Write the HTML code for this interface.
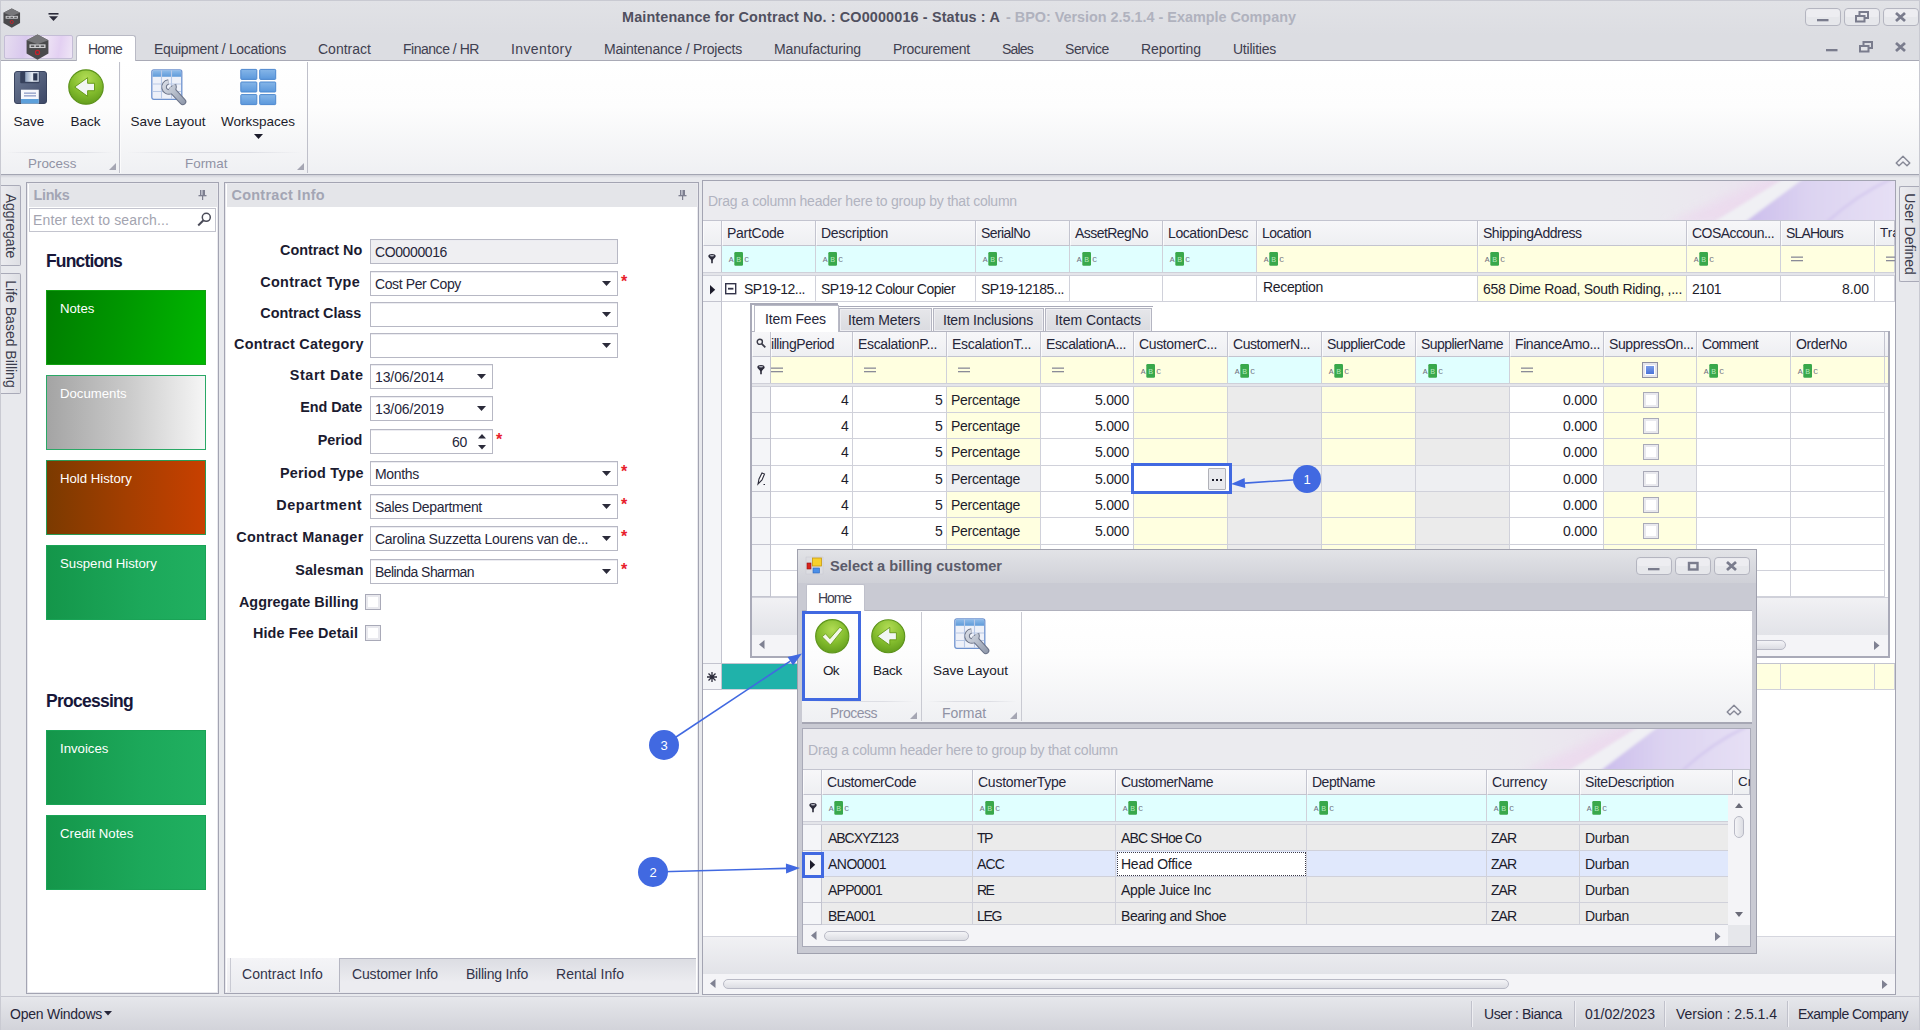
<!DOCTYPE html><html><head><meta charset="utf-8"><title>Maintenance for Contract</title><style>
*{box-sizing:border-box;margin:0;padding:0}
html,body{width:1920px;height:1030px;overflow:hidden;background:#e8e9ed;font-family:"Liberation Sans",sans-serif;font-size:13.4px;color:#1c1c2b}
div{position:absolute}
.t{white-space:nowrap;line-height:16px;height:16px}
.b{font-weight:bold}
.r{text-align:right}
svg{position:absolute;overflow:visible}
</style></head><body>
<div style="left:0px;top:0px;width:1920px;height:35px;background:linear-gradient(#e1e2e6,#dcdde2);border-top:1px solid #c9cad2"></div>
<svg style="left:2.5px;top:8px" width="17.5" height="20.125" viewBox="0 0 20 23"><polygon points="10,0.5 19.5,5.5 19.5,17 10,22.5 0.5,17 0.5,5.5" fill="#4a4a4c"/><polygon points="10,0.5 19.5,5.5 10,9 0.5,5.5" fill="#77777a"/><rect x="3" y="9" width="14" height="3.2" fill="#cfcfd2"/><rect x="4.2" y="10" width="3" height="1.2" fill="#4a4a4c"/><rect x="8.5" y="10" width="3" height="1.2" fill="#4a4a4c"/><rect x="12.8" y="10" width="3" height="1.2" fill="#4a4a4c"/><circle cx="10" cy="16" r="1.8" fill="none" stroke="#c8202a" stroke-width="1"/></svg>
<svg style="left:48px;top:13px" width="11" height="9" viewBox="0 0 11 9"><rect x="0.5" y="0" width="10" height="1.6" fill="#2b2b3a"/><polygon points="1,3.2 10,3.2 5.5,8" fill="#2b2b3a"/></svg>
<div class="t" style="left:622px;top:9px;font-size:14.4px;font-weight:bold;letter-spacing:0.14px;color:#50505f">Maintenance for Contract No. : CO0000016 - Status : A</div>
<div class="t" style="left:1006px;top:9px;font-size:14.4px;font-weight:bold;letter-spacing:-0.01px;color:#b0b2be">- BPO: Version 2.5.1.4 - Example Company</div>
<svg style="left:1805px;top:8px" width="36" height="18"><rect x="0.500" y="0.500" width="35" height="17" rx="3.500" fill="#e6e7eb" stroke="#b4b5c0"/><rect x="1.500" y="1.500" width="33" height="7.5" rx="2" fill="#ededf1"/><rect x="12" y="11" width="11.500" height="2.300" fill="#7a7c8d"/></svg>
<svg style="left:1844px;top:8px" width="36" height="18"><rect x="0.500" y="0.500" width="35" height="17" rx="3.500" fill="#e6e7eb" stroke="#b4b5c0"/><rect x="1.500" y="1.500" width="33" height="7.5" rx="2" fill="#ededf1"/><rect x="15.500" y="4" width="8.500" height="6" fill="none" stroke="#7a7c8d" stroke-width="2"/><rect x="12" y="8" width="8.500" height="5.500" fill="#e3e4e8" stroke="#7a7c8d" stroke-width="2"/></svg>
<svg style="left:1883px;top:8px" width="36" height="18"><rect x="0.500" y="0.500" width="35" height="17" rx="3.500" fill="#e6e7eb" stroke="#b4b5c0"/><rect x="1.500" y="1.500" width="33" height="7.5" rx="2" fill="#ededf1"/><path d="M13,5 L22,13 M22,5 L13,13" stroke="#7a7c8d" stroke-width="2.800" fill="none"/></svg>
<div style="left:0px;top:35px;width:1920px;height:26px;background:#dcdde2;border-bottom:1px solid #a9aab6"></div>
<svg style="left:1814px;top:38px" width="36" height="18"><rect x="12" y="11" width="11.500" height="2.300" fill="#7a7c8d"/></svg>
<svg style="left:1848px;top:38px" width="36" height="18"><rect x="15.500" y="4" width="8.500" height="6" fill="none" stroke="#7a7c8d" stroke-width="2"/><rect x="12" y="8" width="8.500" height="5.500" fill="#e3e4e8" stroke="#7a7c8d" stroke-width="2"/></svg>
<svg style="left:1883px;top:38px" width="36" height="18"><path d="M13,5 L22,13 M22,5 L13,13" stroke="#7a7c8d" stroke-width="2.800" fill="none"/></svg>
<div style="left:4px;top:35px;width:69px;height:24px;border:1px solid #c4bdd6;border-radius:2px;background:linear-gradient(100deg,#e6ddf0 0%,#d9c8ee 30%,#f0e8f6 55%,#e3d0f2 80%,#efe6f6 100%)"></div>
<svg style="left:26px;top:34px" width="23" height="26.45" viewBox="0 0 20 23"><polygon points="10,0.5 19.5,5.5 19.5,17 10,22.5 0.5,17 0.5,5.5" fill="#4a4a4c"/><polygon points="10,0.5 19.5,5.5 10,9 0.5,5.5" fill="#77777a"/><rect x="3" y="9" width="14" height="3.2" fill="#cfcfd2"/><rect x="4.2" y="10" width="3" height="1.2" fill="#4a4a4c"/><rect x="8.5" y="10" width="3" height="1.2" fill="#4a4a4c"/><rect x="12.8" y="10" width="3" height="1.2" fill="#4a4a4c"/><circle cx="10" cy="16" r="1.8" fill="none" stroke="#c8202a" stroke-width="1"/></svg>
<div style="left:76px;top:35px;width:60px;height:27px;background:#fff;border:1px solid #b9bac5;border-bottom:none;border-radius:3px 3px 0 0"></div>
<div class="t" style="left:88px;top:41px;font-size:14px;letter-spacing:-0.84px;color:#3f4050">Home</div>
<div class="t" style="left:154px;top:41px;font-size:14px;letter-spacing:-0.31px;color:#3f4050">Equipment / Locations</div>
<div class="t" style="left:318px;top:41px;font-size:14px;letter-spacing:0.01px;color:#3f4050">Contract</div>
<div class="t" style="left:403px;top:41px;font-size:14px;letter-spacing:-0.48px;color:#3f4050">Finance / HR</div>
<div class="t" style="left:511px;top:41px;font-size:14px;letter-spacing:0.38px;color:#3f4050">Inventory</div>
<div class="t" style="left:604px;top:41px;font-size:14px;letter-spacing:-0.20px;color:#3f4050">Maintenance / Projects</div>
<div class="t" style="left:774px;top:41px;font-size:14px;letter-spacing:-0.13px;color:#3f4050">Manufacturing</div>
<div class="t" style="left:893px;top:41px;font-size:14px;letter-spacing:-0.29px;color:#3f4050">Procurement</div>
<div class="t" style="left:1002px;top:41px;font-size:14px;letter-spacing:-0.81px;color:#3f4050">Sales</div>
<div class="t" style="left:1065px;top:41px;font-size:14px;letter-spacing:-0.38px;color:#3f4050">Service</div>
<div class="t" style="left:1141px;top:41px;font-size:14px;letter-spacing:-0.08px;color:#3f4050">Reporting</div>
<div class="t" style="left:1233px;top:41px;font-size:14px;letter-spacing:-0.24px;color:#3f4050">Utilities</div>
<div style="left:0px;top:61px;width:1920px;height:114px;background:linear-gradient(#ffffff 0%,#fdfdfd 40%,#eff0f3 100%);border-bottom:1px solid #a3a5b2"></div>
<div style="left:0px;top:175px;width:1920px;height:3px;background:linear-gradient(#cfd0d8,#e8e9ed)"></div>
<div style="left:119px;top:62px;width:1px;height:111px;background:#bfc0ca"></div>
<div style="left:120px;top:62px;width:1px;height:111px;background:#fbfbfc"></div>
<div style="left:307px;top:62px;width:1px;height:111px;background:#bfc0ca"></div>
<div style="left:6px;top:152px;width:108px;height:1px;background:linear-gradient(90deg,transparent,#dddee4 30%,#dddee4 70%,transparent)"></div>
<div style="left:126px;top:152px;width:176px;height:1px;background:linear-gradient(90deg,transparent,#dddee4 30%,#dddee4 70%,transparent)"></div>
<div class="t" style="left:28px;top:156px;color:#9092a4">Process</div>
<div class="t" style="left:185px;top:156px;color:#9092a4">Format</div>
<svg style="left:109px;top:163px" width="7" height="7"><polygon points="7,0 7,7 0,7" fill="#a5a6b3"/></svg>
<svg style="left:297px;top:163px" width="7" height="7"><polygon points="7,0 7,7 0,7" fill="#a5a6b3"/></svg>
<svg style="left:1894.5px;top:154.5px" width="16" height="12" viewBox="0 0 16 12"><path d="M8,1.200 L14.800,8 L12,10.800 L8,7 L4,10.800 L1.200,8 Z" fill="#f1f1f5" stroke="#868896" stroke-width="1.400" stroke-linejoin="round"/></svg>
<svg style="left:14px;top:71px" width="33" height="33" viewBox="0 0 33 33">
<defs><linearGradient id="sv14" x1="0" y1="0" x2="1" y2="1"><stop offset="0" stop-color="#6c7994"/><stop offset="1" stop-color="#3d4866"/></linearGradient>
<linearGradient id="sm14" x1="0" y1="0" x2="1" y2="0"><stop offset="0" stop-color="#8fa2bf"/><stop offset="0.5" stop-color="#e6ecf4"/><stop offset="1" stop-color="#c5d0e0"/></linearGradient></defs>
<rect x="0.500" y="0.500" width="32" height="32" rx="2.500" fill="url(#sv14)" stroke="#3a445f"/>
<rect x="6.200" y="1" width="19.400" height="11.300" rx="1" fill="#36415c"/>
<rect x="11.200" y="1" width="13.600" height="9.800" fill="url(#sm14)"/><rect x="19.200" y="2.300" width="4.200" height="7.200" fill="#2c3752"/>
<rect x="7" y="18.700" width="17.800" height="13.800" fill="#f6f8fc"/><rect x="7" y="28" width="17.800" height="4.500" fill="#5da0db"/>
<rect x="10" y="21.500" width="12" height="1.300" fill="#8d9cc6"/><rect x="10" y="24.200" width="12" height="1.300" fill="#8d9cc6"/></svg>
<svg style="left:68.4px;top:69.4px" width="36" height="36" viewBox="0 0 36 36">
<defs><radialGradient id="bk68_4" cx="0.5" cy="0.25" r="0.8"><stop offset="0" stop-color="#b2dc55"/><stop offset="0.55" stop-color="#84bd2e"/><stop offset="1" stop-color="#5f991a"/></radialGradient></defs>
<circle cx="18" cy="18" r="17.200" fill="url(#bk68_4)" stroke="#5d931c" stroke-width="1.200"/>
<path d="M6.700,18 L19.600,8.700 L19.600,14.300 L26.500,14.300 L26.500,21.700 L19.600,21.700 L19.600,27.300 Z" fill="#f1f6f4" stroke="#5f9410" stroke-width="0.900" stroke-linejoin="round"/></svg>
<svg style="left:151px;top:69px" width="37" height="37" viewBox="0 0 37 37">
<defs><linearGradient id="lh151" x1="0" y1="0" x2="0" y2="1"><stop offset="0" stop-color="#8fbcea"/><stop offset="1" stop-color="#5e9ad9"/></linearGradient>
<linearGradient id="lw151" gradientUnits="userSpaceOnUse" x1="12" y1="12" x2="34" y2="34"><stop offset="0" stop-color="#d9dde6"/><stop offset="0.5" stop-color="#b9c0cd"/><stop offset="1" stop-color="#9099ab"/></linearGradient></defs>
<rect x="0.800" y="0.800" width="30" height="29.500" rx="2" fill="#eef1f9" stroke="#6f93cf" stroke-width="1.300"/>
<path d="M1.500,2.800 a1.500,1.500 0 0 1 1.500,-1.500 h25.600 a1.500,1.500 0 0 1 1.500,1.500 v5 h-28.600 z" fill="url(#lh151)"/>
<path d="M1.500,15 H30 M1.500,22.500 H30 M10.500,1.500 V29.500 M20.500,1.500 V29.500" stroke="#b9c9e6" stroke-width="1.100" fill="none"/>
<g fill="none"><path d="M22.600,15.900 A5,5 0 1 1 17.500,13" stroke="#6b7388" stroke-width="5.600"/><path d="M21,21 L31.800,32.600" stroke="#6b7388" stroke-width="7" stroke-linecap="round"/>
<path d="M22.600,15.900 A5,5 0 1 1 17.500,13" stroke="url(#lw151)" stroke-width="3.600"/><path d="M20.500,20.500 L31.800,32.600" stroke="url(#lw151)" stroke-width="5" stroke-linecap="round"/></g></svg>
<svg style="left:240px;top:69px" width="37" height="37" viewBox="0 0 37 37"><defs><linearGradient id="wg240" x1="0" y1="0" x2="0" y2="1"><stop offset="0" stop-color="#86b6e8"/><stop offset="1" stop-color="#5b98dc"/></linearGradient></defs><rect x="0.8" y="0.4" width="16" height="10" rx="0.800" fill="url(#wg240)" stroke="#4d88cf" stroke-width="1"/><rect x="19.7" y="0.4" width="16" height="10" rx="0.800" fill="url(#wg240)" stroke="#4d88cf" stroke-width="1"/><rect x="0.8" y="13.0" width="16" height="10" rx="0.800" fill="url(#wg240)" stroke="#4d88cf" stroke-width="1"/><rect x="19.7" y="13.0" width="16" height="10" rx="0.800" fill="url(#wg240)" stroke="#4d88cf" stroke-width="1"/><rect x="0.8" y="25.6" width="16" height="10" rx="0.800" fill="url(#wg240)" stroke="#4d88cf" stroke-width="1"/><rect x="19.7" y="25.6" width="16" height="10" rx="0.800" fill="url(#wg240)" stroke="#4d88cf" stroke-width="1"/></svg>
<div class="t" style="left:-71px;width:200px;text-align:center;top:114px;font-size:13.5px">Save</div>
<div class="t" style="left:-14.5px;width:200px;text-align:center;top:114px;font-size:13.5px">Back</div>
<div class="t" style="left:68px;width:200px;text-align:center;top:114px;font-size:13.5px">Save Layout</div>
<div class="t" style="left:158px;width:200px;text-align:center;top:114px;font-size:13.5px">Workspaces</div>
<svg style="left:254px;top:134px" width="9" height="5"><polygon points="0,0 9,0 4.5,5" fill="#1c1c2b"/></svg>
<div style="left:0px;top:185px;width:21px;height:81px;border:1px solid #a9aab8;border-left:none;border-radius:0 2px 2px 0;background:linear-gradient(90deg,#ececf0,#dedfe4)"></div><div class="t" style="left:10.5px;top:225.5px;width:0;height:0"><div class="t" style="transform:translate(-50%,-50%) rotate(90deg);color:#3b3c4c;font-size:14px;left:0;top:0">Aggregate</div></div>
<div style="left:0px;top:273px;width:21px;height:121px;border:1px solid #a9aab8;border-left:none;border-radius:0 2px 2px 0;background:linear-gradient(90deg,#ececf0,#dedfe4)"></div><div class="t" style="left:10.5px;top:333.5px;width:0;height:0"><div class="t" style="transform:translate(-50%,-50%) rotate(90deg);color:#3b3c4c;font-size:14px;left:0;top:0">Life Based Billing</div></div>
<div style="left:1899px;top:186px;width:21px;height:96px;border:1px solid #a9aab8;border-right:none;border-radius:2px 0 0 2px;background:linear-gradient(90deg,#ececf0,#dedfe4)"></div><div class="t" style="left:1909.5px;top:234.0px;width:0;height:0"><div class="t" style="transform:translate(-50%,-50%) rotate(90deg);color:#3b3c4c;font-size:14px;left:0;top:0">User Defined</div></div>
<div style="left:26px;top:182px;width:193px;height:812px;border:1px solid #a3a4b2;background:#fff"></div><div style="left:27px;top:183px;width:191px;height:810px;border:1px solid #e9e9ee"></div><div style="left:29px;top:184px;width:188px;height:23px;background:#e4e5e9"></div><div class="t" style="left:33.5px;top:187px;font-size:14.4px;font-weight:bold;letter-spacing:-0.32px;color:#a3a5b4">Links</div><svg style="left:198px;top:190px" width="9" height="10" viewBox="0 0 9 10"><rect x="2" y="0" width="5" height="5.500" fill="#7d7f90"/><rect x="3.2" y="0" width="1.4" height="5" fill="#c9cad4"/><rect x="0.5" y="5" width="8" height="1.3" fill="#7d7f90"/><rect x="4" y="6" width="1.200" height="4" fill="#7d7f90"/></svg>
<div style="left:29px;top:208px;width:187px;height:24px;border:1px solid #c3c4ce;background:#fff"></div>
<div class="t" style="left:33px;top:212px;font-size:14px;letter-spacing:0.13px;color:#a3a4b0">Enter text to search...</div>
<svg style="left:197px;top:212px" width="15" height="15" viewBox="0 0 15 15"><circle cx="9.3" cy="5.300" r="4" fill="none" stroke="#4a4b58" stroke-width="1.5"/><path d="M6.500,8.200 L1.200,13.500" stroke="#4a4b58" stroke-width="2"/></svg>
<div class="t" style="left:46px;top:251px;font-size:17.5px;font-weight:bold;letter-spacing:-0.85px;color:#17173a;line-height:20px;height:20px">Functions</div>
<div class="t" style="left:46px;top:691px;font-size:17.5px;font-weight:bold;letter-spacing:-0.74px;color:#17173a;line-height:20px;height:20px">Processing</div>
<div style="left:46px;top:290px;width:160px;height:75px;background:linear-gradient(100deg,#007d00 0%,#009600 45%,#00b800 100%);border:1px solid #12a012"></div><div class="t" style="left:60px;top:301px;color:#fff;font-size:13.2px">Notes</div>
<div style="left:46px;top:375px;width:160px;height:75px;background:linear-gradient(90deg,#a4a4a4 0%,#c9c9c9 50%,#f6f6f6 100%);border:1px solid #2aa866"></div><div class="t" style="left:60px;top:386px;color:#fff;font-size:13.2px">Documents</div>
<div style="left:46px;top:460px;width:160px;height:75px;background:linear-gradient(90deg,#7b3a00 0%,#a33e00 50%,#c84000 100%);border:1px solid #2a9a55"></div><div class="t" style="left:60px;top:471px;color:#fff;font-size:13.2px">Hold History</div>
<div style="left:46px;top:545px;width:160px;height:75px;background:linear-gradient(90deg,#14964a 0%,#1ca85a 60%,#20b060 100%);border:1px solid #1aa356"></div><div class="t" style="left:60px;top:556px;color:#fff;font-size:13.2px">Suspend History</div>
<div style="left:46px;top:730px;width:160px;height:75px;background:linear-gradient(90deg,#14964a 0%,#1ca85a 60%,#20b060 100%);border:1px solid #1aa356"></div><div class="t" style="left:60px;top:741px;color:#fff;font-size:13.2px">Invoices</div>
<div style="left:46px;top:815px;width:160px;height:75px;background:linear-gradient(90deg,#14964a 0%,#1ca85a 60%,#20b060 100%);border:1px solid #1aa356"></div><div class="t" style="left:60px;top:826px;color:#fff;font-size:13.2px">Credit Notes</div>
<div style="left:224px;top:182px;width:475px;height:812px;border:1px solid #a3a4b2;background:#fff"></div><div style="left:225px;top:183px;width:473px;height:810px;border:1px solid #e9e9ee"></div><div style="left:227px;top:184px;width:470px;height:23px;background:#e4e5e9"></div><div class="t" style="left:231.5px;top:187px;font-size:14.4px;font-weight:bold;letter-spacing:0.30px;color:#a3a5b4">Contract Info</div><svg style="left:678px;top:190px" width="9" height="10" viewBox="0 0 9 10"><rect x="2" y="0" width="5" height="5.500" fill="#7d7f90"/><rect x="3.2" y="0" width="1.4" height="5" fill="#c9cad4"/><rect x="0.5" y="5" width="8" height="1.3" fill="#7d7f90"/><rect x="4" y="6" width="1.200" height="4" fill="#7d7f90"/></svg>
<div class="t" style="left:280px;top:242px;font-size:14.4px;font-weight:bold;letter-spacing:-0.01px;color:#1b1b30">Contract No</div>
<div style="left:370px;top:239px;width:248px;height:25px;border:1px solid #b7b8c4;background:#efeff2;box-shadow:inset 0 1px 0 #ececf1"></div><div class="t" style="left:375px;top:244px;font-size:14px;letter-spacing:-0.39px;color:#26263a">CO0000016</div>
<div class="t" style="left:260.3px;top:274px;font-size:14.4px;font-weight:bold;letter-spacing:0.31px;color:#1b1b30">Contract Type</div>
<div style="left:370px;top:271px;width:248px;height:25px;border:1px solid #b7b8c4;background:#fff;box-shadow:inset 0 1px 0 #ececf1"></div><div class="t" style="left:375px;top:276px;font-size:14px;letter-spacing:-0.39px;color:#26263a">Cost Per Copy</div><svg style="left:602px;top:281px" width="9" height="5"><polygon points="0,0 9,0 4.5,5" fill="#2b2b3a"/></svg><div class="t b" style="left:621px;top:274px;color:#e8202c;font-size:16px">*</div>
<div class="t" style="left:260.3px;top:305px;font-size:14.4px;font-weight:bold;letter-spacing:-0.04px;color:#1b1b30">Contract Class</div>
<div style="left:370px;top:302px;width:248px;height:25px;border:1px solid #b7b8c4;background:#fff;box-shadow:inset 0 1px 0 #ececf1"></div><svg style="left:602px;top:312px" width="9" height="5"><polygon points="0,0 9,0 4.5,5" fill="#2b2b3a"/></svg>
<div class="t" style="left:234px;top:336px;font-size:14.4px;font-weight:bold;letter-spacing:0.24px;color:#1b1b30">Contract Category</div>
<div style="left:370px;top:333px;width:248px;height:25px;border:1px solid #b7b8c4;background:#fff;box-shadow:inset 0 1px 0 #ececf1"></div><svg style="left:602px;top:343px" width="9" height="5"><polygon points="0,0 9,0 4.5,5" fill="#2b2b3a"/></svg>
<div class="t" style="left:289.8px;top:367px;font-size:14.4px;font-weight:bold;letter-spacing:0.58px;color:#1b1b30">Start Date</div>
<div style="left:370px;top:364px;width:123px;height:25px;border:1px solid #b7b8c4;background:#fff;box-shadow:inset 0 1px 0 #ececf1"></div><div class="t" style="left:375px;top:369px;font-size:14px;letter-spacing:-0.11px;color:#26263a">13/06/2014</div><svg style="left:477px;top:374px" width="9" height="5"><polygon points="0,0 9,0 4.5,5" fill="#2b2b3a"/></svg>
<div class="t" style="left:300.2px;top:399px;font-size:14.4px;font-weight:bold;letter-spacing:-0.05px;color:#1b1b30">End Date</div>
<div style="left:370px;top:396px;width:123px;height:25px;border:1px solid #b7b8c4;background:#fff;box-shadow:inset 0 1px 0 #ececf1"></div><div class="t" style="left:375px;top:401px;font-size:14px;letter-spacing:-0.11px;color:#26263a">13/06/2019</div><svg style="left:477px;top:406px" width="9" height="5"><polygon points="0,0 9,0 4.5,5" fill="#2b2b3a"/></svg>
<div class="t" style="left:317.7px;top:432px;font-size:14.4px;font-weight:bold;letter-spacing:-0.05px;color:#1b1b30">Period</div>
<div style="left:370px;top:429px;width:123px;height:25px;border:1px solid #b7b8c4;background:#fff;box-shadow:inset 0 1px 0 #ececf1"></div>
<div class="t" style="left:452px;top:434px;font-size:14px;letter-spacing:-0.29px;color:#26263a">60</div>
<svg style="left:478px;top:434px" width="8" height="16"><polygon points="0,4.500 8,4.500 4,0" fill="#2b2b3a"/><polygon points="0,11 8,11 4,15.500" fill="#2b2b3a"/></svg>
<div class="t b" style="left:496px;top:432px;color:#e8202c;font-size:16px">*</div>
<div class="t" style="left:280px;top:465px;font-size:14.4px;font-weight:bold;letter-spacing:0.21px;color:#1b1b30">Period Type</div>
<div style="left:370px;top:461px;width:248px;height:25px;border:1px solid #b7b8c4;background:#fff;box-shadow:inset 0 1px 0 #ececf1"></div><div class="t" style="left:375px;top:466px;font-size:14px;letter-spacing:-0.32px;color:#26263a">Months</div><svg style="left:602px;top:471px" width="9" height="5"><polygon points="0,0 9,0 4.5,5" fill="#2b2b3a"/></svg><div class="t b" style="left:621px;top:464px;color:#e8202c;font-size:16px">*</div>
<div class="t" style="left:276.3px;top:497px;font-size:14.4px;font-weight:bold;letter-spacing:0.59px;color:#1b1b30">Department</div>
<div style="left:370px;top:494px;width:248px;height:25px;border:1px solid #b7b8c4;background:#fff;box-shadow:inset 0 1px 0 #ececf1"></div><div class="t" style="left:375px;top:499px;font-size:14px;letter-spacing:-0.32px;color:#26263a">Sales Department</div><svg style="left:602px;top:504px" width="9" height="5"><polygon points="0,0 9,0 4.5,5" fill="#2b2b3a"/></svg><div class="t b" style="left:621px;top:497px;color:#e8202c;font-size:16px">*</div>
<div class="t" style="left:236.3px;top:529px;font-size:14.4px;font-weight:bold;letter-spacing:0.31px;color:#1b1b30">Contract Manager</div>
<div style="left:370px;top:526px;width:248px;height:25px;border:1px solid #b7b8c4;background:#fff;box-shadow:inset 0 1px 0 #ececf1"></div><div class="t" style="left:375px;top:531px;font-size:14px;letter-spacing:-0.27px;color:#26263a">Carolina Suzzetta Lourens van de...</div><svg style="left:602px;top:536px" width="9" height="5"><polygon points="0,0 9,0 4.5,5" fill="#2b2b3a"/></svg><div class="t b" style="left:621px;top:529px;color:#e8202c;font-size:16px">*</div>
<div class="t" style="left:295.2px;top:562px;font-size:14.4px;font-weight:bold;letter-spacing:0.15px;color:#1b1b30">Salesman</div>
<div style="left:370px;top:559px;width:248px;height:25px;border:1px solid #b7b8c4;background:#fff;box-shadow:inset 0 1px 0 #ececf1"></div><div class="t" style="left:375px;top:564px;font-size:14px;letter-spacing:-0.56px;color:#26263a">Belinda Sharman</div><svg style="left:602px;top:569px" width="9" height="5"><polygon points="0,0 9,0 4.5,5" fill="#2b2b3a"/></svg><div class="t b" style="left:621px;top:562px;color:#e8202c;font-size:16px">*</div>
<div class="t" style="left:238.9px;top:594px;font-size:14.4px;font-weight:bold;letter-spacing:0.03px;color:#1b1b30">Aggregate Billing</div>
<div style="left:365px;top:594px;width:16px;height:16px;border:1px solid #a9aab8;background:#fff;box-shadow:inset 0 0 0 2px #e9e9ee"></div>
<div class="t" style="left:252.9px;top:625px;font-size:14.4px;font-weight:bold;letter-spacing:0.13px;color:#1b1b30">Hide Fee Detail</div>
<div style="left:365px;top:625px;width:16px;height:16px;border:1px solid #a9aab8;background:#fff;box-shadow:inset 0 0 0 2px #e9e9ee"></div>
<div style="left:227px;top:958px;width:469px;height:34px;background:linear-gradient(#dcdde3,#ececf0 70%);border-top:1px solid #b5b6c2"></div>
<div style="left:227px;top:958px;width:4px;height:34px;background:linear-gradient(#f6f6f8,#ececf0)"></div>
<div style="left:230px;top:958px;width:110px;height:34px;background:linear-gradient(#f4f4f7,#eaebef);border-left:1px solid #c9cad3;border-right:1px solid #b5b6c2"></div>
<div class="t" style="left:242px;top:966px;font-size:14px;letter-spacing:0.06px;color:#33344a">Contract Info</div>
<div class="t" style="left:352px;top:966px;font-size:14px;letter-spacing:-0.15px;color:#33344a">Customer Info</div>
<div class="t" style="left:466px;top:966px;font-size:14px;letter-spacing:-0.22px;color:#33344a">Billing Info</div>
<div class="t" style="left:556px;top:966px;font-size:14px;letter-spacing:0.03px;color:#33344a">Rental Info</div>
<div style="left:702px;top:180px;width:1194px;height:815px;border:1px solid #a3a4b2;background:#fff"></div>
<div style="left:703px;top:181px;width:1192px;height:40px;background:#ebebef;border-bottom:1px solid #c3c4cf"></div>
<svg style="left:1595px;top:181px" width="300" height="39" viewBox="0 0 300 40" preserveAspectRatio="none">
<defs><linearGradient id="sgm" x1="0" y1="0" x2="1" y2="0"><stop offset="0" stop-color="#ebebef" stop-opacity="0"/><stop offset="0.5" stop-color="#ebe3ef" stop-opacity="0.900"/><stop offset="1" stop-color="#e8e0f2"/></linearGradient>
<linearGradient id="slm" x1="0" y1="0" x2="1" y2="0"><stop offset="0" stop-color="#cbbdec"/><stop offset="0.4" stop-color="#dcd3f1"/><stop offset="1" stop-color="#e7e1f5"/></linearGradient>
<clipPath id="scm"><rect x="0" y="0" width="300" height="40"/></clipPath>
<filter id="sbm" x="-10%" y="-50%" width="120%" height="200%"><feGaussianBlur stdDeviation="1.600"/></filter>
<filter id="shm" x="-10%" y="-50%" width="120%" height="200%"><feGaussianBlur stdDeviation="5"/></filter></defs>
<g clip-path="url(#scm)"><rect x="0" y="0" width="300" height="40" fill="url(#sgm)"/>
<polygon points="70,44 175,-4 215,-4 125,44" fill="#ecd8ee" opacity="0.700" filter="url(#shm)"/>
<g filter="url(#sbm)">
<polygon points="150,42 205,-2 310,-2 310,42" fill="url(#slm)"/>
<polygon points="119,42 188,-2 208,-2 150,42" fill="#f0f0f4"/>
<path d="M232,42 Q262,14 296,-2" stroke="#cdbfec" stroke-width="2" fill="none" opacity="0.800"/>
</g></g></svg>
<div class="t" style="left:708px;top:193px;font-size:14px;letter-spacing:-0.24px;color:#b1b3c0">Drag a column header here to group by that column</div>
<div style="left:1875px;top:221px;width:20px;height:24px;overflow:hidden;z-index:2"><div class="t" style="left:5px;top:4px;color:#26263a">Tra</div></div>
<div style="left:703px;top:221px;width:19px;height:25px;background:linear-gradient(#f7f7f9,#eeeff2);border-right:1px solid #c3c4cf;border-bottom:1px solid #c3c4cf;border-left:1px solid #fbfbfc;overflow:hidden"></div><div style="left:722px;top:221px;width:94px;height:25px;background:linear-gradient(#f7f7f9,#eeeff2);border-right:1px solid #c3c4cf;border-bottom:1px solid #c3c4cf;border-left:1px solid #fbfbfc;overflow:hidden"></div><div style="left:722px;top:221px;width:94px;height:25px;overflow:hidden"><div class="t" style="left:5px;top:4px;font-size:14px;letter-spacing:-0.27px;color:#26263a">PartCode</div></div><div style="left:816px;top:221px;width:160px;height:25px;background:linear-gradient(#f7f7f9,#eeeff2);border-right:1px solid #c3c4cf;border-bottom:1px solid #c3c4cf;border-left:1px solid #fbfbfc;overflow:hidden"></div><div style="left:816px;top:221px;width:160px;height:25px;overflow:hidden"><div class="t" style="left:5px;top:4px;font-size:14px;letter-spacing:-0.28px;color:#26263a">Description</div></div><div style="left:976px;top:221px;width:94px;height:25px;background:linear-gradient(#f7f7f9,#eeeff2);border-right:1px solid #c3c4cf;border-bottom:1px solid #c3c4cf;border-left:1px solid #fbfbfc;overflow:hidden"></div><div style="left:976px;top:221px;width:94px;height:25px;overflow:hidden"><div class="t" style="left:5px;top:4px;font-size:14px;letter-spacing:-0.59px;color:#26263a">SerialNo</div></div><div style="left:1070px;top:221px;width:93px;height:25px;background:linear-gradient(#f7f7f9,#eeeff2);border-right:1px solid #c3c4cf;border-bottom:1px solid #c3c4cf;border-left:1px solid #fbfbfc;overflow:hidden"></div><div style="left:1070px;top:221px;width:93px;height:25px;overflow:hidden"><div class="t" style="left:5px;top:4px;font-size:14px;letter-spacing:-0.56px;color:#26263a">AssetRegNo</div></div><div style="left:1163px;top:221px;width:94px;height:25px;background:linear-gradient(#f7f7f9,#eeeff2);border-right:1px solid #c3c4cf;border-bottom:1px solid #c3c4cf;border-left:1px solid #fbfbfc;overflow:hidden"></div><div style="left:1163px;top:221px;width:94px;height:25px;overflow:hidden"><div class="t" style="left:5px;top:4px;font-size:14px;letter-spacing:-0.40px;color:#26263a">LocationDesc</div></div><div style="left:1257px;top:221px;width:221px;height:25px;background:linear-gradient(#f7f7f9,#eeeff2);border-right:1px solid #c3c4cf;border-bottom:1px solid #c3c4cf;border-left:1px solid #fbfbfc;overflow:hidden"></div><div style="left:1257px;top:221px;width:221px;height:25px;overflow:hidden"><div class="t" style="left:5px;top:4px;font-size:14px;letter-spacing:-0.49px;color:#26263a">Location</div></div><div style="left:1478px;top:221px;width:209px;height:25px;background:linear-gradient(#f7f7f9,#eeeff2);border-right:1px solid #c3c4cf;border-bottom:1px solid #c3c4cf;border-left:1px solid #fbfbfc;overflow:hidden"></div><div style="left:1478px;top:221px;width:209px;height:25px;overflow:hidden"><div class="t" style="left:5px;top:4px;font-size:14px;letter-spacing:-0.49px;color:#26263a">ShippingAddress</div></div><div style="left:1687px;top:221px;width:94px;height:25px;background:linear-gradient(#f7f7f9,#eeeff2);border-right:1px solid #c3c4cf;border-bottom:1px solid #c3c4cf;border-left:1px solid #fbfbfc;overflow:hidden"></div><div style="left:1687px;top:221px;width:94px;height:25px;overflow:hidden"><div class="t" style="left:5px;top:4px;font-size:14px;letter-spacing:-0.56px;color:#26263a">COSAccoun...</div></div><div style="left:1781px;top:221px;width:94px;height:25px;background:linear-gradient(#f7f7f9,#eeeff2);border-right:1px solid #c3c4cf;border-bottom:1px solid #c3c4cf;border-left:1px solid #fbfbfc;overflow:hidden"></div><div style="left:1781px;top:221px;width:94px;height:25px;overflow:hidden"><div class="t" style="left:5px;top:4px;font-size:14px;letter-spacing:-0.85px;color:#26263a">SLAHours</div></div><div style="left:1875px;top:221px;width:20px;height:25px;background:linear-gradient(#f7f7f9,#eeeff2);border-right:1px solid #c3c4cf;border-bottom:1px solid #c3c4cf;border-left:1px solid #fbfbfc;overflow:hidden"></div>
<div style="left:703px;top:246px;width:19px;height:26px;background:#f4f5f8;border-right:1px solid #c3c4cf"></div>
<svg style="left:708px;top:254px" width="8" height="10" viewBox="0 0 8 10"><path d="M0.300,2.300 A3.700,2.300 0 0 1 7.700,2.300 C7.700,3.800 5,4.800 4.800,6.500 L4.800,9.300 L3.200,9.300 L3.200,6.500 C3,4.800 0.300,3.800 0.300,2.300 Z" fill="#2b2b3a"/><ellipse cx="4" cy="1.700" rx="2.200" ry="0.800" fill="#b9bac6"/></svg>
<div style="left:722px;top:246px;width:94px;height:26px;background:#e0ffff;border-right:1px solid #d0d1da"></div>
<svg style="left:728.5px;top:252.4px" width="21" height="14" viewBox="0 0 21 14"><rect x="5.300" y="0" width="8.700" height="13.700" rx="1.200" fill="#39a84b"/><text x="9.700" y="10.300" font-size="8" font-family="Liberation Mono,monospace" fill="#b4e6bc" text-anchor="middle">B</text><text x="2.200" y="10.300" font-size="8" font-family="Liberation Mono,monospace" fill="#6f717e" text-anchor="middle">A</text><text x="17.600" y="10.300" font-size="8" font-family="Liberation Mono,monospace" fill="#6f717e" text-anchor="middle">C</text></svg>
<div style="left:816px;top:246px;width:160px;height:26px;background:#e0ffff;border-right:1px solid #d0d1da"></div>
<svg style="left:822.5px;top:252.4px" width="21" height="14" viewBox="0 0 21 14"><rect x="5.300" y="0" width="8.700" height="13.700" rx="1.200" fill="#39a84b"/><text x="9.700" y="10.300" font-size="8" font-family="Liberation Mono,monospace" fill="#b4e6bc" text-anchor="middle">B</text><text x="2.200" y="10.300" font-size="8" font-family="Liberation Mono,monospace" fill="#6f717e" text-anchor="middle">A</text><text x="17.600" y="10.300" font-size="8" font-family="Liberation Mono,monospace" fill="#6f717e" text-anchor="middle">C</text></svg>
<div style="left:976px;top:246px;width:94px;height:26px;background:#e0ffff;border-right:1px solid #d0d1da"></div>
<svg style="left:982.5px;top:252.4px" width="21" height="14" viewBox="0 0 21 14"><rect x="5.300" y="0" width="8.700" height="13.700" rx="1.200" fill="#39a84b"/><text x="9.700" y="10.300" font-size="8" font-family="Liberation Mono,monospace" fill="#b4e6bc" text-anchor="middle">B</text><text x="2.200" y="10.300" font-size="8" font-family="Liberation Mono,monospace" fill="#6f717e" text-anchor="middle">A</text><text x="17.600" y="10.300" font-size="8" font-family="Liberation Mono,monospace" fill="#6f717e" text-anchor="middle">C</text></svg>
<div style="left:1070px;top:246px;width:93px;height:26px;background:#e0ffff;border-right:1px solid #d0d1da"></div>
<svg style="left:1076.5px;top:252.4px" width="21" height="14" viewBox="0 0 21 14"><rect x="5.300" y="0" width="8.700" height="13.700" rx="1.200" fill="#39a84b"/><text x="9.700" y="10.300" font-size="8" font-family="Liberation Mono,monospace" fill="#b4e6bc" text-anchor="middle">B</text><text x="2.200" y="10.300" font-size="8" font-family="Liberation Mono,monospace" fill="#6f717e" text-anchor="middle">A</text><text x="17.600" y="10.300" font-size="8" font-family="Liberation Mono,monospace" fill="#6f717e" text-anchor="middle">C</text></svg>
<div style="left:1163px;top:246px;width:94px;height:26px;background:#e0ffff;border-right:1px solid #d0d1da"></div>
<svg style="left:1169.5px;top:252.4px" width="21" height="14" viewBox="0 0 21 14"><rect x="5.300" y="0" width="8.700" height="13.700" rx="1.200" fill="#39a84b"/><text x="9.700" y="10.300" font-size="8" font-family="Liberation Mono,monospace" fill="#b4e6bc" text-anchor="middle">B</text><text x="2.200" y="10.300" font-size="8" font-family="Liberation Mono,monospace" fill="#6f717e" text-anchor="middle">A</text><text x="17.600" y="10.300" font-size="8" font-family="Liberation Mono,monospace" fill="#6f717e" text-anchor="middle">C</text></svg>
<div style="left:1257px;top:246px;width:221px;height:26px;background:#ffffe0;border-right:1px solid #d0d1da"></div>
<svg style="left:1263.5px;top:252.4px" width="21" height="14" viewBox="0 0 21 14"><rect x="5.300" y="0" width="8.700" height="13.700" rx="1.200" fill="#39a84b"/><text x="9.700" y="10.300" font-size="8" font-family="Liberation Mono,monospace" fill="#b4e6bc" text-anchor="middle">B</text><text x="2.200" y="10.300" font-size="8" font-family="Liberation Mono,monospace" fill="#6f717e" text-anchor="middle">A</text><text x="17.600" y="10.300" font-size="8" font-family="Liberation Mono,monospace" fill="#6f717e" text-anchor="middle">C</text></svg>
<div style="left:1478px;top:246px;width:209px;height:26px;background:#ffffe0;border-right:1px solid #d0d1da"></div>
<svg style="left:1484.5px;top:252.4px" width="21" height="14" viewBox="0 0 21 14"><rect x="5.300" y="0" width="8.700" height="13.700" rx="1.200" fill="#39a84b"/><text x="9.700" y="10.300" font-size="8" font-family="Liberation Mono,monospace" fill="#b4e6bc" text-anchor="middle">B</text><text x="2.200" y="10.300" font-size="8" font-family="Liberation Mono,monospace" fill="#6f717e" text-anchor="middle">A</text><text x="17.600" y="10.300" font-size="8" font-family="Liberation Mono,monospace" fill="#6f717e" text-anchor="middle">C</text></svg>
<div style="left:1687px;top:246px;width:94px;height:26px;background:#ffffe0;border-right:1px solid #d0d1da"></div>
<svg style="left:1693.5px;top:252.4px" width="21" height="14" viewBox="0 0 21 14"><rect x="5.300" y="0" width="8.700" height="13.700" rx="1.200" fill="#39a84b"/><text x="9.700" y="10.300" font-size="8" font-family="Liberation Mono,monospace" fill="#b4e6bc" text-anchor="middle">B</text><text x="2.200" y="10.300" font-size="8" font-family="Liberation Mono,monospace" fill="#6f717e" text-anchor="middle">A</text><text x="17.600" y="10.300" font-size="8" font-family="Liberation Mono,monospace" fill="#6f717e" text-anchor="middle">C</text></svg>
<div style="left:1781px;top:246px;width:94px;height:26px;background:#ffffe0;border-right:1px solid #d0d1da"></div>
<svg style="left:1791px;top:256px" width="12" height="6"><rect x="0" y="0.500" width="12" height="1.300" fill="#8a8b98"/><rect x="0" y="4" width="12" height="1.300" fill="#8a8b98"/></svg>
<div style="left:1875px;top:246px;width:20px;height:26px;background:#ffffe0;border-right:1px solid #d0d1da"></div>
<div style="left:1875px;top:246px;width:20px;height:26px;overflow:hidden"><svg style="left:11px;top:10px" width="12" height="6"><rect x="0" y="0.500" width="12" height="1.300" fill="#8a8b98"/><rect x="0" y="4" width="12" height="1.300" fill="#8a8b98"/></svg></div>
<div style="left:703px;top:272px;width:1192px;height:4px;background:#e4e5ea;border-top:1px solid #cfd0d9;border-bottom:1px solid #cfd0d9"></div>
<div style="left:703px;top:276px;width:19px;height:26px;background:#f4f5f8;border-right:1px solid #c3c4cf;border-bottom:1px solid #c3c4cf"></div>
<svg style="left:710px;top:284.5px" width="6" height="10"><polygon points="0,0 5.200,4.700 0,9.400" fill="#1c1c2b"/></svg>
<div style="left:722px;top:276px;width:94px;height:26px;background:#fff;border-right:1px solid #d0d1da;border-bottom:1px solid #d0d1da"></div>
<div style="left:816px;top:276px;width:160px;height:26px;background:#fff;border-right:1px solid #d0d1da;border-bottom:1px solid #d0d1da"></div>
<div style="left:976px;top:276px;width:94px;height:26px;background:#fff;border-right:1px solid #d0d1da;border-bottom:1px solid #d0d1da"></div>
<div style="left:1070px;top:276px;width:93px;height:26px;background:#fff;border-right:1px solid #d0d1da;border-bottom:1px solid #d0d1da"></div>
<div style="left:1163px;top:276px;width:94px;height:26px;background:#fff;border-right:1px solid #d0d1da;border-bottom:1px solid #d0d1da"></div>
<div style="left:1257px;top:276px;width:221px;height:26px;background:#fff;border-right:1px solid #d0d1da;border-bottom:1px solid #d0d1da"></div>
<div style="left:1478px;top:276px;width:209px;height:26px;background:#ffffe0;border-right:1px solid #d0d1da;border-bottom:1px solid #d0d1da"></div>
<div style="left:1687px;top:276px;width:94px;height:26px;background:#fff;border-right:1px solid #d0d1da;border-bottom:1px solid #d0d1da"></div>
<div style="left:1781px;top:276px;width:94px;height:26px;background:#fff;border-right:1px solid #d0d1da;border-bottom:1px solid #d0d1da"></div>
<div style="left:1875px;top:276px;width:20px;height:26px;background:#fff;border-right:1px solid #d0d1da;border-bottom:1px solid #d0d1da"></div>
<svg style="left:725px;top:282.500px" width="12" height="12"><rect x="0.700" y="0.700" width="10" height="10" fill="#fff" stroke="#34344a" stroke-width="1.400"/><rect x="3" y="4.800" width="5.400" height="1.800" fill="#34344a"/></svg>
<div class="t" style="left:744px;top:281px;font-size:14px;letter-spacing:-0.52px;">SP19-12...</div>
<div class="t" style="left:821px;top:281px;font-size:14px;letter-spacing:-0.51px;">SP19-12 Colour Copier</div>
<div class="t" style="left:981px;top:281px;font-size:14px;letter-spacing:-0.50px;">SP19-12185...</div>
<div class="t" style="left:1263px;top:279px;font-size:14px;letter-spacing:-0.34px;">Reception</div>
<div class="t" style="left:1483px;top:281px;font-size:14px;letter-spacing:-0.29px;">658 Dime Road, South Riding, ,...</div>
<div class="t" style="left:1692px;top:281px;font-size:14px;letter-spacing:-0.54px;">2101</div>
<div class="t" style="left:1842px;top:281px;font-size:14px;letter-spacing:-0.06px;">8.00</div>
<div style="left:703px;top:302px;width:19px;height:362px;background:#f4f5f8;border-right:1px solid #c3c4cf"></div>
<div style="left:703px;top:663px;width:1192px;height:1px;background:#c3c4cf"></div>
<div style="left:703px;top:664px;width:19px;height:26px;background:#f4f5f8;border-right:1px solid #c3c4cf;border-bottom:1px solid #c3c4cf"></div>
<svg style="left:707px;top:672px" width="10" height="10" viewBox="0 0 10 10"><path d="M5,0 V10 M0,5 H10 M1.500,1.500 L8.500,8.500 M8.500,1.500 L1.500,8.500" stroke="#2b2b3a" stroke-width="1.300"/></svg>
<div style="left:722px;top:664px;width:94px;height:26px;background:#20b2aa;border-bottom:1px solid #d0d1da"></div>
<div style="left:816px;top:664px;width:160px;height:26px;background:#20b2aa;border-right:1px solid #d0d1da;border-bottom:1px solid #d0d1da"></div>
<div style="left:976px;top:664px;width:94px;height:26px;background:#fff;border-right:1px solid #d0d1da;border-bottom:1px solid #d0d1da"></div>
<div style="left:1070px;top:664px;width:93px;height:26px;background:#fff;border-right:1px solid #d0d1da;border-bottom:1px solid #d0d1da"></div>
<div style="left:1163px;top:664px;width:94px;height:26px;background:#fff;border-right:1px solid #d0d1da;border-bottom:1px solid #d0d1da"></div>
<div style="left:1257px;top:664px;width:221px;height:26px;background:#fff;border-right:1px solid #d0d1da;border-bottom:1px solid #d0d1da"></div>
<div style="left:1478px;top:664px;width:209px;height:26px;background:#ffffe0;border-right:1px solid #d0d1da;border-bottom:1px solid #d0d1da"></div>
<div style="left:1687px;top:664px;width:94px;height:26px;background:#ffffe0;border-right:1px solid #d0d1da;border-bottom:1px solid #d0d1da"></div>
<div style="left:1781px;top:664px;width:94px;height:26px;background:#ffffe0;border-right:1px solid #d0d1da;border-bottom:1px solid #d0d1da"></div>
<div style="left:1875px;top:664px;width:20px;height:26px;background:#ffffe0;border-right:1px solid #d0d1da;border-bottom:1px solid #d0d1da"></div>
<div style="left:703px;top:936px;width:1192px;height:38px;background:linear-gradient(#f1f1f4,#e2e3e8);border-top:1px solid #d5d6de"></div>
<div style="left:703px;top:974px;width:1192px;height:20px;background:#f4f4f7"></div>
<svg style="left:710px;top:979px" width="6" height="9"><polygon points="5.500,0 0,4.500 5.500,9" fill="#7f8192"/></svg>
<div style="left:723px;top:979px;width:786px;height:10px;border:1px solid #b9bac6;border-radius:5px;background:linear-gradient(#f4f4f7,#dcdde3)"></div>
<svg style="left:1882px;top:979.5px" width="6" height="9"><polygon points="0,0 5.500,4.500 0,9" fill="#7f8192"/></svg>
<div style="left:750px;top:303px;width:1140px;height:355px;border:2px solid #a9aab8;border-top:none;border-right:none;background:#fff"></div>
<div style="left:1888px;top:331px;width:2px;height:327px;background:#a9aab8"></div>
<div style="left:750px;top:303px;width:88px;height:2px;background:#a9aab8"></div>
<div style="left:838px;top:306px;width:315px;height:1px;background:#a9aab8"></div>
<div style="left:1152px;top:331px;width:738px;height:1px;background:#a9aab8"></div>
<div style="left:752px;top:331px;width:1136px;height:1px;background:#b4b5c1"></div>
<div style="left:839px;top:308px;width:93px;height:24px;background:linear-gradient(#e6e6ea,#dadbe0);border:1px solid #b4b5c1;box-shadow:inset 0 0 0 1px #eeeef2"></div><div class="t" style="left:848px;top:312px;font-size:14px;letter-spacing:-0.17px;color:#26263a">Item Meters</div>
<div style="left:933px;top:308px;width:111px;height:24px;background:linear-gradient(#e6e6ea,#dadbe0);border:1px solid #b4b5c1;box-shadow:inset 0 0 0 1px #eeeef2"></div><div class="t" style="left:943px;top:312px;font-size:14px;letter-spacing:-0.23px;color:#26263a">Item Inclusions</div>
<div style="left:1045px;top:308px;width:107px;height:24px;background:linear-gradient(#e6e6ea,#dadbe0);border:1px solid #b4b5c1;box-shadow:inset 0 0 0 1px #eeeef2"></div><div class="t" style="left:1055px;top:312px;font-size:14px;letter-spacing:-0.03px;color:#26263a">Item Contacts</div>
<div style="left:754px;top:305px;width:85px;height:27px;background:#fff;border:1px solid #b9bac6;border-bottom:none"></div><div class="t" style="left:765px;top:311px;font-size:14px;letter-spacing:-0.14px;color:#26263a">Item Fees</div>
<div style="left:752px;top:332px;width:19px;height:25px;background:linear-gradient(#f7f7f9,#eeeff2);border-right:1px solid #c3c4cf;border-bottom:1px solid #c3c4cf;border-left:1px solid #fbfbfc;overflow:hidden"></div><div style="left:771px;top:332px;width:82px;height:25px;background:linear-gradient(#f7f7f9,#eeeff2);border-right:1px solid #c3c4cf;border-bottom:1px solid #c3c4cf;border-left:1px solid #fbfbfc;overflow:hidden"></div><div style="left:853px;top:332px;width:94px;height:25px;background:linear-gradient(#f7f7f9,#eeeff2);border-right:1px solid #c3c4cf;border-bottom:1px solid #c3c4cf;border-left:1px solid #fbfbfc;overflow:hidden"></div><div style="left:853px;top:332px;width:94px;height:25px;overflow:hidden"><div class="t" style="left:5px;top:4px;font-size:14px;letter-spacing:-0.34px;color:#26263a">EscalationP...</div></div><div style="left:947px;top:332px;width:94px;height:25px;background:linear-gradient(#f7f7f9,#eeeff2);border-right:1px solid #c3c4cf;border-bottom:1px solid #c3c4cf;border-left:1px solid #fbfbfc;overflow:hidden"></div><div style="left:947px;top:332px;width:94px;height:25px;overflow:hidden"><div class="t" style="left:5px;top:4px;font-size:14px;letter-spacing:-0.30px;color:#26263a">EscalationT...</div></div><div style="left:1041px;top:332px;width:93px;height:25px;background:linear-gradient(#f7f7f9,#eeeff2);border-right:1px solid #c3c4cf;border-bottom:1px solid #c3c4cf;border-left:1px solid #fbfbfc;overflow:hidden"></div><div style="left:1041px;top:332px;width:93px;height:25px;overflow:hidden"><div class="t" style="left:5px;top:4px;font-size:14px;letter-spacing:-0.40px;color:#26263a">EscalationA...</div></div><div style="left:1134px;top:332px;width:94px;height:25px;background:linear-gradient(#f7f7f9,#eeeff2);border-right:1px solid #c3c4cf;border-bottom:1px solid #c3c4cf;border-left:1px solid #fbfbfc;overflow:hidden"></div><div style="left:1134px;top:332px;width:94px;height:25px;overflow:hidden"><div class="t" style="left:5px;top:4px;font-size:14px;letter-spacing:-0.37px;color:#26263a">CustomerC...</div></div><div style="left:1228px;top:332px;width:94px;height:25px;background:linear-gradient(#f7f7f9,#eeeff2);border-right:1px solid #c3c4cf;border-bottom:1px solid #c3c4cf;border-left:1px solid #fbfbfc;overflow:hidden"></div><div style="left:1228px;top:332px;width:94px;height:25px;overflow:hidden"><div class="t" style="left:5px;top:4px;font-size:14px;letter-spacing:-0.46px;color:#26263a">CustomerN...</div></div><div style="left:1322px;top:332px;width:94px;height:25px;background:linear-gradient(#f7f7f9,#eeeff2);border-right:1px solid #c3c4cf;border-bottom:1px solid #c3c4cf;border-left:1px solid #fbfbfc;overflow:hidden"></div><div style="left:1322px;top:332px;width:94px;height:25px;overflow:hidden"><div class="t" style="left:5px;top:4px;font-size:14px;letter-spacing:-0.57px;color:#26263a">SupplierCode</div></div><div style="left:1416px;top:332px;width:94px;height:25px;background:linear-gradient(#f7f7f9,#eeeff2);border-right:1px solid #c3c4cf;border-bottom:1px solid #c3c4cf;border-left:1px solid #fbfbfc;overflow:hidden"></div><div style="left:1416px;top:332px;width:94px;height:25px;overflow:hidden"><div class="t" style="left:5px;top:4px;font-size:14px;letter-spacing:-0.56px;color:#26263a">SupplierName</div></div><div style="left:1510px;top:332px;width:94px;height:25px;background:linear-gradient(#f7f7f9,#eeeff2);border-right:1px solid #c3c4cf;border-bottom:1px solid #c3c4cf;border-left:1px solid #fbfbfc;overflow:hidden"></div><div style="left:1510px;top:332px;width:94px;height:25px;overflow:hidden"><div class="t" style="left:5px;top:4px;font-size:14px;letter-spacing:-0.41px;color:#26263a">FinanceAmo...</div></div><div style="left:1604px;top:332px;width:93px;height:25px;background:linear-gradient(#f7f7f9,#eeeff2);border-right:1px solid #c3c4cf;border-bottom:1px solid #c3c4cf;border-left:1px solid #fbfbfc;overflow:hidden"></div><div style="left:1604px;top:332px;width:93px;height:25px;overflow:hidden"><div class="t" style="left:5px;top:4px;font-size:14px;letter-spacing:-0.38px;color:#26263a">SuppressOn...</div></div><div style="left:1697px;top:332px;width:94px;height:25px;background:linear-gradient(#f7f7f9,#eeeff2);border-right:1px solid #c3c4cf;border-bottom:1px solid #c3c4cf;border-left:1px solid #fbfbfc;overflow:hidden"></div><div style="left:1697px;top:332px;width:94px;height:25px;overflow:hidden"><div class="t" style="left:5px;top:4px;font-size:14px;letter-spacing:-0.67px;color:#26263a">Comment</div></div><div style="left:1791px;top:332px;width:94px;height:25px;background:linear-gradient(#f7f7f9,#eeeff2);border-right:1px solid #c3c4cf;border-bottom:1px solid #c3c4cf;border-left:1px solid #fbfbfc;overflow:hidden"></div><div style="left:1791px;top:332px;width:94px;height:25px;overflow:hidden"><div class="t" style="left:5px;top:4px;font-size:14px;letter-spacing:-0.38px;color:#26263a">OrderNo</div></div>
<div style="left:1885px;top:332px;width:3px;height:25px;background:linear-gradient(#f7f7f9,#eeeff2);border-bottom:1px solid #c3c4cf"></div>
<div class="t" style="left:771px;top:336px;font-size:14px;letter-spacing:-0.46px;color:#26263a">illingPeriod</div>
<svg style="left:756px;top:338px" width="10" height="10" viewBox="0 0 10 10"><circle cx="3.800" cy="3.800" r="2.600" fill="none" stroke="#3a3b48" stroke-width="1.400"/><path d="M5.800,5.800 L9.300,9.300" stroke="#3a3b48" stroke-width="1.800"/></svg>
<div style="left:752px;top:357px;width:19px;height:26px;background:#f4f5f8;border-right:1px solid #c3c4cf"></div>
<svg style="left:757px;top:365px" width="8" height="10" viewBox="0 0 8 10"><path d="M0.300,2.300 A3.700,2.300 0 0 1 7.700,2.300 C7.700,3.800 5,4.800 4.800,6.500 L4.800,9.300 L3.200,9.300 L3.200,6.500 C3,4.800 0.300,3.800 0.300,2.300 Z" fill="#2b2b3a"/><ellipse cx="4" cy="1.700" rx="2.200" ry="0.800" fill="#b9bac6"/></svg>
<div style="left:771px;top:357px;width:82px;height:26px;background:#ffffe0;border-right:1px solid #d0d1da"></div>
<svg style="left:771px;top:367px" width="12" height="6"><rect x="0" y="0.500" width="12" height="1.300" fill="#8a8b98"/><rect x="0" y="4" width="12" height="1.300" fill="#8a8b98"/></svg>
<div style="left:853px;top:357px;width:94px;height:26px;background:#ffffe0;border-right:1px solid #d0d1da"></div>
<svg style="left:864px;top:367px" width="12" height="6"><rect x="0" y="0.500" width="12" height="1.300" fill="#8a8b98"/><rect x="0" y="4" width="12" height="1.300" fill="#8a8b98"/></svg>
<div style="left:947px;top:357px;width:94px;height:26px;background:#ffffe0;border-right:1px solid #d0d1da"></div>
<svg style="left:958px;top:367px" width="12" height="6"><rect x="0" y="0.500" width="12" height="1.300" fill="#8a8b98"/><rect x="0" y="4" width="12" height="1.300" fill="#8a8b98"/></svg>
<div style="left:1041px;top:357px;width:93px;height:26px;background:#ffffe0;border-right:1px solid #d0d1da"></div>
<svg style="left:1052px;top:367px" width="12" height="6"><rect x="0" y="0.500" width="12" height="1.300" fill="#8a8b98"/><rect x="0" y="4" width="12" height="1.300" fill="#8a8b98"/></svg>
<div style="left:1134px;top:357px;width:94px;height:26px;background:#ffffe0;border-right:1px solid #d0d1da"></div>
<svg style="left:1140.5px;top:364px" width="21" height="14" viewBox="0 0 21 14"><rect x="5.300" y="0" width="8.700" height="13.700" rx="1.200" fill="#39a84b"/><text x="9.700" y="10.300" font-size="8" font-family="Liberation Mono,monospace" fill="#b4e6bc" text-anchor="middle">B</text><text x="2.200" y="10.300" font-size="8" font-family="Liberation Mono,monospace" fill="#6f717e" text-anchor="middle">A</text><text x="17.600" y="10.300" font-size="8" font-family="Liberation Mono,monospace" fill="#6f717e" text-anchor="middle">C</text></svg>
<div style="left:1228px;top:357px;width:94px;height:26px;background:#e0ffff;border-right:1px solid #d0d1da"></div>
<svg style="left:1234.5px;top:364px" width="21" height="14" viewBox="0 0 21 14"><rect x="5.300" y="0" width="8.700" height="13.700" rx="1.200" fill="#39a84b"/><text x="9.700" y="10.300" font-size="8" font-family="Liberation Mono,monospace" fill="#b4e6bc" text-anchor="middle">B</text><text x="2.200" y="10.300" font-size="8" font-family="Liberation Mono,monospace" fill="#6f717e" text-anchor="middle">A</text><text x="17.600" y="10.300" font-size="8" font-family="Liberation Mono,monospace" fill="#6f717e" text-anchor="middle">C</text></svg>
<div style="left:1322px;top:357px;width:94px;height:26px;background:#ffffe0;border-right:1px solid #d0d1da"></div>
<svg style="left:1328.5px;top:364px" width="21" height="14" viewBox="0 0 21 14"><rect x="5.300" y="0" width="8.700" height="13.700" rx="1.200" fill="#39a84b"/><text x="9.700" y="10.300" font-size="8" font-family="Liberation Mono,monospace" fill="#b4e6bc" text-anchor="middle">B</text><text x="2.200" y="10.300" font-size="8" font-family="Liberation Mono,monospace" fill="#6f717e" text-anchor="middle">A</text><text x="17.600" y="10.300" font-size="8" font-family="Liberation Mono,monospace" fill="#6f717e" text-anchor="middle">C</text></svg>
<div style="left:1416px;top:357px;width:94px;height:26px;background:#e0ffff;border-right:1px solid #d0d1da"></div>
<svg style="left:1422.5px;top:364px" width="21" height="14" viewBox="0 0 21 14"><rect x="5.300" y="0" width="8.700" height="13.700" rx="1.200" fill="#39a84b"/><text x="9.700" y="10.300" font-size="8" font-family="Liberation Mono,monospace" fill="#b4e6bc" text-anchor="middle">B</text><text x="2.200" y="10.300" font-size="8" font-family="Liberation Mono,monospace" fill="#6f717e" text-anchor="middle">A</text><text x="17.600" y="10.300" font-size="8" font-family="Liberation Mono,monospace" fill="#6f717e" text-anchor="middle">C</text></svg>
<div style="left:1510px;top:357px;width:94px;height:26px;background:#ffffe0;border-right:1px solid #d0d1da"></div>
<svg style="left:1521px;top:367px" width="12" height="6"><rect x="0" y="0.500" width="12" height="1.300" fill="#8a8b98"/><rect x="0" y="4" width="12" height="1.300" fill="#8a8b98"/></svg>
<div style="left:1604px;top:357px;width:93px;height:26px;background:#ffffe0;border-right:1px solid #d0d1da"></div>
<div style="left:1642px;top:362px;width:16px;height:16px;border:1px solid #8e90a0;background:#fff;box-shadow:inset 0 0 0 2px #e4e5ec"><div style="left:3px;top:3px;width:8px;height:8px;background:linear-gradient(#7b9de8,#4a74d8)"></div></div>
<div style="left:1697px;top:357px;width:94px;height:26px;background:#ffffe0;border-right:1px solid #d0d1da"></div>
<svg style="left:1703.5px;top:364px" width="21" height="14" viewBox="0 0 21 14"><rect x="5.300" y="0" width="8.700" height="13.700" rx="1.200" fill="#39a84b"/><text x="9.700" y="10.300" font-size="8" font-family="Liberation Mono,monospace" fill="#b4e6bc" text-anchor="middle">B</text><text x="2.200" y="10.300" font-size="8" font-family="Liberation Mono,monospace" fill="#6f717e" text-anchor="middle">A</text><text x="17.600" y="10.300" font-size="8" font-family="Liberation Mono,monospace" fill="#6f717e" text-anchor="middle">C</text></svg>
<div style="left:1791px;top:357px;width:94px;height:26px;background:#ffffe0;border-right:1px solid #d0d1da"></div>
<svg style="left:1797.5px;top:364px" width="21" height="14" viewBox="0 0 21 14"><rect x="5.300" y="0" width="8.700" height="13.700" rx="1.200" fill="#39a84b"/><text x="9.700" y="10.300" font-size="8" font-family="Liberation Mono,monospace" fill="#b4e6bc" text-anchor="middle">B</text><text x="2.200" y="10.300" font-size="8" font-family="Liberation Mono,monospace" fill="#6f717e" text-anchor="middle">A</text><text x="17.600" y="10.300" font-size="8" font-family="Liberation Mono,monospace" fill="#6f717e" text-anchor="middle">C</text></svg>
<div style="left:1885px;top:357px;width:3px;height:26px;background:#ffffe0"></div>
<div style="left:752px;top:383px;width:1136px;height:4px;background:#e4e5ea;border-top:1px solid #cfd0d9;border-bottom:1px solid #cfd0d9"></div>
<div style="left:752px;top:387px;width:19px;height:26px;background:#f4f5f8;border-right:1px solid #c3c4cf;border-bottom:1px solid #c3c4cf"></div>
<div style="left:771px;top:387px;width:82px;height:26px;background:#fff;border-right:1px solid #d0d1da;border-bottom:1px solid #d0d1da"></div>
<div style="left:853px;top:387px;width:94px;height:26px;background:#fff;border-right:1px solid #d0d1da;border-bottom:1px solid #d0d1da"></div>
<div style="left:947px;top:387px;width:94px;height:26px;background:#ffffe0;border-right:1px solid #d0d1da;border-bottom:1px solid #d0d1da"></div>
<div style="left:1041px;top:387px;width:93px;height:26px;background:#fff;border-right:1px solid #d0d1da;border-bottom:1px solid #d0d1da"></div>
<div style="left:1134px;top:387px;width:94px;height:26px;background:#ffffe0;border-right:1px solid #d0d1da;border-bottom:1px solid #d0d1da"></div>
<div style="left:1228px;top:387px;width:94px;height:26px;background:#ebebeb;border-right:1px solid #d0d1da;border-bottom:1px solid #d0d1da"></div>
<div style="left:1322px;top:387px;width:94px;height:26px;background:#ffffe0;border-right:1px solid #d0d1da;border-bottom:1px solid #d0d1da"></div>
<div style="left:1416px;top:387px;width:94px;height:26px;background:#ebebeb;border-right:1px solid #d0d1da;border-bottom:1px solid #d0d1da"></div>
<div style="left:1510px;top:387px;width:94px;height:26px;background:#fff;border-right:1px solid #d0d1da;border-bottom:1px solid #d0d1da"></div>
<div style="left:1604px;top:387px;width:93px;height:26px;background:#ffffe0;border-right:1px solid #d0d1da;border-bottom:1px solid #d0d1da"></div>
<div style="left:1697px;top:387px;width:94px;height:26px;background:#fff;border-right:1px solid #d0d1da;border-bottom:1px solid #d0d1da"></div>
<div style="left:1791px;top:387px;width:94px;height:26px;background:#fff;border-right:1px solid #d0d1da;border-bottom:1px solid #d0d1da"></div>
<div class="t" style="left:841px;top:392px;font-size:14px;letter-spacing:0.20px;">4</div>
<div class="t" style="left:935px;top:392px;font-size:14px;letter-spacing:-0.80px;">5</div>
<div class="t" style="left:951px;top:392px;font-size:14px;letter-spacing:-0.26px;">Percentage</div>
<div class="t" style="left:1095px;top:392px;font-size:14px;letter-spacing:-0.21px;">5.000</div>
<div class="t" style="left:1563px;top:392px;font-size:14px;letter-spacing:-0.21px;">0.000</div>
<div style="left:1643px;top:392px;width:16px;height:16px;border:1px solid #a9aab8;background:#fff;box-shadow:inset 0 0 0 2px #e9e9ee"></div>
<div style="left:752px;top:413px;width:19px;height:26px;background:#f4f5f8;border-right:1px solid #c3c4cf;border-bottom:1px solid #c3c4cf"></div>
<div style="left:771px;top:413px;width:82px;height:26px;background:#fff;border-right:1px solid #d0d1da;border-bottom:1px solid #d0d1da"></div>
<div style="left:853px;top:413px;width:94px;height:26px;background:#fff;border-right:1px solid #d0d1da;border-bottom:1px solid #d0d1da"></div>
<div style="left:947px;top:413px;width:94px;height:26px;background:#ffffe0;border-right:1px solid #d0d1da;border-bottom:1px solid #d0d1da"></div>
<div style="left:1041px;top:413px;width:93px;height:26px;background:#fff;border-right:1px solid #d0d1da;border-bottom:1px solid #d0d1da"></div>
<div style="left:1134px;top:413px;width:94px;height:26px;background:#ffffe0;border-right:1px solid #d0d1da;border-bottom:1px solid #d0d1da"></div>
<div style="left:1228px;top:413px;width:94px;height:26px;background:#ebebeb;border-right:1px solid #d0d1da;border-bottom:1px solid #d0d1da"></div>
<div style="left:1322px;top:413px;width:94px;height:26px;background:#ffffe0;border-right:1px solid #d0d1da;border-bottom:1px solid #d0d1da"></div>
<div style="left:1416px;top:413px;width:94px;height:26px;background:#ebebeb;border-right:1px solid #d0d1da;border-bottom:1px solid #d0d1da"></div>
<div style="left:1510px;top:413px;width:94px;height:26px;background:#fff;border-right:1px solid #d0d1da;border-bottom:1px solid #d0d1da"></div>
<div style="left:1604px;top:413px;width:93px;height:26px;background:#ffffe0;border-right:1px solid #d0d1da;border-bottom:1px solid #d0d1da"></div>
<div style="left:1697px;top:413px;width:94px;height:26px;background:#fff;border-right:1px solid #d0d1da;border-bottom:1px solid #d0d1da"></div>
<div style="left:1791px;top:413px;width:94px;height:26px;background:#fff;border-right:1px solid #d0d1da;border-bottom:1px solid #d0d1da"></div>
<div class="t" style="left:841px;top:418px;font-size:14px;letter-spacing:0.20px;">4</div>
<div class="t" style="left:935px;top:418px;font-size:14px;letter-spacing:-0.80px;">5</div>
<div class="t" style="left:951px;top:418px;font-size:14px;letter-spacing:-0.26px;">Percentage</div>
<div class="t" style="left:1095px;top:418px;font-size:14px;letter-spacing:-0.21px;">5.000</div>
<div class="t" style="left:1563px;top:418px;font-size:14px;letter-spacing:-0.21px;">0.000</div>
<div style="left:1643px;top:418px;width:16px;height:16px;border:1px solid #a9aab8;background:#fff;box-shadow:inset 0 0 0 2px #e9e9ee"></div>
<div style="left:752px;top:439px;width:19px;height:27px;background:#f4f5f8;border-right:1px solid #c3c4cf;border-bottom:1px solid #c3c4cf"></div>
<div style="left:771px;top:439px;width:82px;height:27px;background:#fff;border-right:1px solid #d0d1da;border-bottom:1px solid #d0d1da"></div>
<div style="left:853px;top:439px;width:94px;height:27px;background:#fff;border-right:1px solid #d0d1da;border-bottom:1px solid #d0d1da"></div>
<div style="left:947px;top:439px;width:94px;height:27px;background:#ffffe0;border-right:1px solid #d0d1da;border-bottom:1px solid #d0d1da"></div>
<div style="left:1041px;top:439px;width:93px;height:27px;background:#fff;border-right:1px solid #d0d1da;border-bottom:1px solid #d0d1da"></div>
<div style="left:1134px;top:439px;width:94px;height:27px;background:#ffffe0;border-right:1px solid #d0d1da;border-bottom:1px solid #d0d1da"></div>
<div style="left:1228px;top:439px;width:94px;height:27px;background:#ebebeb;border-right:1px solid #d0d1da;border-bottom:1px solid #d0d1da"></div>
<div style="left:1322px;top:439px;width:94px;height:27px;background:#ffffe0;border-right:1px solid #d0d1da;border-bottom:1px solid #d0d1da"></div>
<div style="left:1416px;top:439px;width:94px;height:27px;background:#ebebeb;border-right:1px solid #d0d1da;border-bottom:1px solid #d0d1da"></div>
<div style="left:1510px;top:439px;width:94px;height:27px;background:#fff;border-right:1px solid #d0d1da;border-bottom:1px solid #d0d1da"></div>
<div style="left:1604px;top:439px;width:93px;height:27px;background:#ffffe0;border-right:1px solid #d0d1da;border-bottom:1px solid #d0d1da"></div>
<div style="left:1697px;top:439px;width:94px;height:27px;background:#fff;border-right:1px solid #d0d1da;border-bottom:1px solid #d0d1da"></div>
<div style="left:1791px;top:439px;width:94px;height:27px;background:#fff;border-right:1px solid #d0d1da;border-bottom:1px solid #d0d1da"></div>
<div class="t" style="left:841px;top:444px;font-size:14px;letter-spacing:0.20px;">4</div>
<div class="t" style="left:935px;top:444px;font-size:14px;letter-spacing:-0.80px;">5</div>
<div class="t" style="left:951px;top:444px;font-size:14px;letter-spacing:-0.26px;">Percentage</div>
<div class="t" style="left:1095px;top:444px;font-size:14px;letter-spacing:-0.21px;">5.000</div>
<div class="t" style="left:1563px;top:444px;font-size:14px;letter-spacing:-0.21px;">0.000</div>
<div style="left:1643px;top:444px;width:16px;height:16px;border:1px solid #a9aab8;background:#fff;box-shadow:inset 0 0 0 2px #e9e9ee"></div>
<div style="left:752px;top:466px;width:19px;height:26px;background:#f4f5f8;border-right:1px solid #c3c4cf;border-bottom:1px solid #c3c4cf"></div>
<div style="left:771px;top:466px;width:82px;height:26px;background:#fff;border-right:1px solid #d0d1da;border-bottom:1px solid #d0d1da"></div>
<div style="left:853px;top:466px;width:94px;height:26px;background:#fff;border-right:1px solid #d0d1da;border-bottom:1px solid #d0d1da"></div>
<div style="left:947px;top:466px;width:94px;height:26px;background:#eeeff2;border-right:1px solid #d0d1da;border-bottom:1px solid #d0d1da"></div>
<div style="left:1041px;top:466px;width:93px;height:26px;background:#fff;border-right:1px solid #d0d1da;border-bottom:1px solid #d0d1da"></div>
<div style="left:1134px;top:466px;width:94px;height:26px;background:#eeeff2;border-right:1px solid #d0d1da;border-bottom:1px solid #d0d1da"></div>
<div style="left:1228px;top:466px;width:94px;height:26px;background:#eeeff2;border-right:1px solid #d0d1da;border-bottom:1px solid #d0d1da"></div>
<div style="left:1322px;top:466px;width:94px;height:26px;background:#eeeff2;border-right:1px solid #d0d1da;border-bottom:1px solid #d0d1da"></div>
<div style="left:1416px;top:466px;width:94px;height:26px;background:#eeeff2;border-right:1px solid #d0d1da;border-bottom:1px solid #d0d1da"></div>
<div style="left:1510px;top:466px;width:94px;height:26px;background:#fff;border-right:1px solid #d0d1da;border-bottom:1px solid #d0d1da"></div>
<div style="left:1604px;top:466px;width:93px;height:26px;background:#eeeff2;border-right:1px solid #d0d1da;border-bottom:1px solid #d0d1da"></div>
<div style="left:1697px;top:466px;width:94px;height:26px;background:#fff;border-right:1px solid #d0d1da;border-bottom:1px solid #d0d1da"></div>
<div style="left:1791px;top:466px;width:94px;height:26px;background:#fff;border-right:1px solid #d0d1da;border-bottom:1px solid #d0d1da"></div>
<div class="t" style="left:841px;top:471px;font-size:14px;letter-spacing:0.20px;">4</div>
<div class="t" style="left:935px;top:471px;font-size:14px;letter-spacing:-0.80px;">5</div>
<div class="t" style="left:951px;top:471px;font-size:14px;letter-spacing:-0.26px;">Percentage</div>
<div class="t" style="left:1095px;top:471px;font-size:14px;letter-spacing:-0.21px;">5.000</div>
<div class="t" style="left:1563px;top:471px;font-size:14px;letter-spacing:-0.21px;">0.000</div>
<div style="left:1643px;top:471px;width:16px;height:16px;border:1px solid #a9aab8;background:#fff;box-shadow:inset 0 0 0 2px #e9e9ee"></div>
<div style="left:752px;top:492px;width:19px;height:26px;background:#f4f5f8;border-right:1px solid #c3c4cf;border-bottom:1px solid #c3c4cf"></div>
<div style="left:771px;top:492px;width:82px;height:26px;background:#fff;border-right:1px solid #d0d1da;border-bottom:1px solid #d0d1da"></div>
<div style="left:853px;top:492px;width:94px;height:26px;background:#fff;border-right:1px solid #d0d1da;border-bottom:1px solid #d0d1da"></div>
<div style="left:947px;top:492px;width:94px;height:26px;background:#ffffe0;border-right:1px solid #d0d1da;border-bottom:1px solid #d0d1da"></div>
<div style="left:1041px;top:492px;width:93px;height:26px;background:#fff;border-right:1px solid #d0d1da;border-bottom:1px solid #d0d1da"></div>
<div style="left:1134px;top:492px;width:94px;height:26px;background:#ffffe0;border-right:1px solid #d0d1da;border-bottom:1px solid #d0d1da"></div>
<div style="left:1228px;top:492px;width:94px;height:26px;background:#ebebeb;border-right:1px solid #d0d1da;border-bottom:1px solid #d0d1da"></div>
<div style="left:1322px;top:492px;width:94px;height:26px;background:#ffffe0;border-right:1px solid #d0d1da;border-bottom:1px solid #d0d1da"></div>
<div style="left:1416px;top:492px;width:94px;height:26px;background:#ebebeb;border-right:1px solid #d0d1da;border-bottom:1px solid #d0d1da"></div>
<div style="left:1510px;top:492px;width:94px;height:26px;background:#fff;border-right:1px solid #d0d1da;border-bottom:1px solid #d0d1da"></div>
<div style="left:1604px;top:492px;width:93px;height:26px;background:#ffffe0;border-right:1px solid #d0d1da;border-bottom:1px solid #d0d1da"></div>
<div style="left:1697px;top:492px;width:94px;height:26px;background:#fff;border-right:1px solid #d0d1da;border-bottom:1px solid #d0d1da"></div>
<div style="left:1791px;top:492px;width:94px;height:26px;background:#fff;border-right:1px solid #d0d1da;border-bottom:1px solid #d0d1da"></div>
<div class="t" style="left:841px;top:497px;font-size:14px;letter-spacing:0.20px;">4</div>
<div class="t" style="left:935px;top:497px;font-size:14px;letter-spacing:-0.80px;">5</div>
<div class="t" style="left:951px;top:497px;font-size:14px;letter-spacing:-0.26px;">Percentage</div>
<div class="t" style="left:1095px;top:497px;font-size:14px;letter-spacing:-0.21px;">5.000</div>
<div class="t" style="left:1563px;top:497px;font-size:14px;letter-spacing:-0.21px;">0.000</div>
<div style="left:1643px;top:497px;width:16px;height:16px;border:1px solid #a9aab8;background:#fff;box-shadow:inset 0 0 0 2px #e9e9ee"></div>
<div style="left:752px;top:518px;width:19px;height:27px;background:#f4f5f8;border-right:1px solid #c3c4cf;border-bottom:1px solid #c3c4cf"></div>
<div style="left:771px;top:518px;width:82px;height:27px;background:#fff;border-right:1px solid #d0d1da;border-bottom:1px solid #d0d1da"></div>
<div style="left:853px;top:518px;width:94px;height:27px;background:#fff;border-right:1px solid #d0d1da;border-bottom:1px solid #d0d1da"></div>
<div style="left:947px;top:518px;width:94px;height:27px;background:#ffffe0;border-right:1px solid #d0d1da;border-bottom:1px solid #d0d1da"></div>
<div style="left:1041px;top:518px;width:93px;height:27px;background:#fff;border-right:1px solid #d0d1da;border-bottom:1px solid #d0d1da"></div>
<div style="left:1134px;top:518px;width:94px;height:27px;background:#ffffe0;border-right:1px solid #d0d1da;border-bottom:1px solid #d0d1da"></div>
<div style="left:1228px;top:518px;width:94px;height:27px;background:#ebebeb;border-right:1px solid #d0d1da;border-bottom:1px solid #d0d1da"></div>
<div style="left:1322px;top:518px;width:94px;height:27px;background:#ffffe0;border-right:1px solid #d0d1da;border-bottom:1px solid #d0d1da"></div>
<div style="left:1416px;top:518px;width:94px;height:27px;background:#ebebeb;border-right:1px solid #d0d1da;border-bottom:1px solid #d0d1da"></div>
<div style="left:1510px;top:518px;width:94px;height:27px;background:#fff;border-right:1px solid #d0d1da;border-bottom:1px solid #d0d1da"></div>
<div style="left:1604px;top:518px;width:93px;height:27px;background:#ffffe0;border-right:1px solid #d0d1da;border-bottom:1px solid #d0d1da"></div>
<div style="left:1697px;top:518px;width:94px;height:27px;background:#fff;border-right:1px solid #d0d1da;border-bottom:1px solid #d0d1da"></div>
<div style="left:1791px;top:518px;width:94px;height:27px;background:#fff;border-right:1px solid #d0d1da;border-bottom:1px solid #d0d1da"></div>
<div class="t" style="left:841px;top:523px;font-size:14px;letter-spacing:0.20px;">4</div>
<div class="t" style="left:935px;top:523px;font-size:14px;letter-spacing:-0.80px;">5</div>
<div class="t" style="left:951px;top:523px;font-size:14px;letter-spacing:-0.26px;">Percentage</div>
<div class="t" style="left:1095px;top:523px;font-size:14px;letter-spacing:-0.21px;">5.000</div>
<div class="t" style="left:1563px;top:523px;font-size:14px;letter-spacing:-0.21px;">0.000</div>
<div style="left:1643px;top:523px;width:16px;height:16px;border:1px solid #a9aab8;background:#fff;box-shadow:inset 0 0 0 2px #e9e9ee"></div>
<div style="left:752px;top:545px;width:19px;height:26px;background:#f4f5f8;border-right:1px solid #c3c4cf;border-bottom:1px solid #c3c4cf"></div>
<div style="left:771px;top:545px;width:82px;height:26px;background:#fff;border-right:1px solid #d0d1da;border-bottom:1px solid #d0d1da"></div>
<div style="left:853px;top:545px;width:94px;height:26px;background:#fff;border-right:1px solid #d0d1da;border-bottom:1px solid #d0d1da"></div>
<div style="left:947px;top:545px;width:94px;height:26px;background:#ffffe0;border-right:1px solid #d0d1da;border-bottom:1px solid #d0d1da"></div>
<div style="left:1041px;top:545px;width:93px;height:26px;background:#fff;border-right:1px solid #d0d1da;border-bottom:1px solid #d0d1da"></div>
<div style="left:1134px;top:545px;width:94px;height:26px;background:#ffffe0;border-right:1px solid #d0d1da;border-bottom:1px solid #d0d1da"></div>
<div style="left:1228px;top:545px;width:94px;height:26px;background:#ebebeb;border-right:1px solid #d0d1da;border-bottom:1px solid #d0d1da"></div>
<div style="left:1322px;top:545px;width:94px;height:26px;background:#ffffe0;border-right:1px solid #d0d1da;border-bottom:1px solid #d0d1da"></div>
<div style="left:1416px;top:545px;width:94px;height:26px;background:#ebebeb;border-right:1px solid #d0d1da;border-bottom:1px solid #d0d1da"></div>
<div style="left:1510px;top:545px;width:94px;height:26px;background:#fff;border-right:1px solid #d0d1da;border-bottom:1px solid #d0d1da"></div>
<div style="left:1604px;top:545px;width:93px;height:26px;background:#ffffe0;border-right:1px solid #d0d1da;border-bottom:1px solid #d0d1da"></div>
<div style="left:1697px;top:545px;width:94px;height:26px;background:#fff;border-right:1px solid #d0d1da;border-bottom:1px solid #d0d1da"></div>
<div style="left:1791px;top:545px;width:94px;height:26px;background:#fff;border-right:1px solid #d0d1da;border-bottom:1px solid #d0d1da"></div>
<div style="left:752px;top:571px;width:19px;height:26px;background:#f4f5f8;border-right:1px solid #c3c4cf;border-bottom:1px solid #c3c4cf"></div>
<div style="left:771px;top:571px;width:82px;height:26px;background:#fff;border-right:1px solid #d0d1da;border-bottom:1px solid #d0d1da"></div>
<div style="left:853px;top:571px;width:94px;height:26px;background:#fff;border-right:1px solid #d0d1da;border-bottom:1px solid #d0d1da"></div>
<div style="left:947px;top:571px;width:94px;height:26px;background:#ffffe0;border-right:1px solid #d0d1da;border-bottom:1px solid #d0d1da"></div>
<div style="left:1041px;top:571px;width:93px;height:26px;background:#fff;border-right:1px solid #d0d1da;border-bottom:1px solid #d0d1da"></div>
<div style="left:1134px;top:571px;width:94px;height:26px;background:#ffffe0;border-right:1px solid #d0d1da;border-bottom:1px solid #d0d1da"></div>
<div style="left:1228px;top:571px;width:94px;height:26px;background:#ebebeb;border-right:1px solid #d0d1da;border-bottom:1px solid #d0d1da"></div>
<div style="left:1322px;top:571px;width:94px;height:26px;background:#ffffe0;border-right:1px solid #d0d1da;border-bottom:1px solid #d0d1da"></div>
<div style="left:1416px;top:571px;width:94px;height:26px;background:#ebebeb;border-right:1px solid #d0d1da;border-bottom:1px solid #d0d1da"></div>
<div style="left:1510px;top:571px;width:94px;height:26px;background:#fff;border-right:1px solid #d0d1da;border-bottom:1px solid #d0d1da"></div>
<div style="left:1604px;top:571px;width:93px;height:26px;background:#ffffe0;border-right:1px solid #d0d1da;border-bottom:1px solid #d0d1da"></div>
<div style="left:1697px;top:571px;width:94px;height:26px;background:#fff;border-right:1px solid #d0d1da;border-bottom:1px solid #d0d1da"></div>
<div style="left:1791px;top:571px;width:94px;height:26px;background:#fff;border-right:1px solid #d0d1da;border-bottom:1px solid #d0d1da"></div>
<div style="left:1885px;top:387px;width:3px;height:210px;background:#fff"></div>
<svg style="left:756px;top:472px" width="10" height="14" viewBox="0 0 10 14"><path d="M2,12 L3,7 L6,1 L8.500,2 L6,8 Z" fill="#fff" stroke="#2b2b3a" stroke-width="1.100"/><path d="M7.500,12.500 h1.500" stroke="#2b2b3a" stroke-width="1.200"/></svg>
<div style="left:1131px;top:463px;width:100.5px;height:31px;border:3px solid #4169e1;background:#fff"></div>
<div style="left:1208px;top:468px;width:18px;height:22px;border:1px solid #b0b1b8;background:#e9eaee;border-radius:1px"><div style="left:3px;top:10px;width:2px;height:2px;background:#1c1c2b;box-shadow:4px 0 0 #1c1c2b,8px 0 0 #1c1c2b"></div></div>
<div style="left:752px;top:597px;width:1136px;height:38px;background:linear-gradient(#f1f1f4,#e2e3e8);border-top:1px solid #cfd0d9"></div>
<div style="left:752px;top:635px;width:1136px;height:21px;background:#f4f4f7"></div>
<svg style="left:759px;top:640px" width="6" height="9"><polygon points="5.500,0 0,4.500 5.500,9" fill="#7f8192"/></svg>
<div style="left:1400px;top:640px;width:386px;height:10px;border:1px solid #b9bac6;border-radius:5px;background:linear-gradient(#f4f4f7,#dcdde3)"></div>
<svg style="left:1874px;top:640.5px" width="6" height="9"><polygon points="0,0 5.500,4.500 0,9" fill="#7f8192"/></svg>
<div style="left:797px;top:549px;width:960px;height:405px;border:1px solid #a0a1ae;background:#c9cad3;box-shadow:0 0 0 0 #000"></div>
<div style="left:798px;top:550px;width:958px;height:33px;background:linear-gradient(#e2e3e7,#cfd0d7)"></div>
<svg style="left:806px;top:557px" width="17" height="17" viewBox="0 0 17 17"><rect x="0" y="0" width="17" height="17" fill="#dcdde2" stroke="#c6c7d0" stroke-width="0.500"/><rect x="6.500" y="1" width="9" height="8" fill="#f7d02c" stroke="#c89a10" stroke-width="0.800"/><rect x="1" y="6" width="4" height="6" fill="#d8231c" stroke="#981010" stroke-width="0.600"/><rect x="7" y="11" width="6.500" height="5" fill="#4a8fe8" stroke="#2a63b8" stroke-width="0.600"/></svg>
<div class="t" style="left:830px;top:558px;font-size:14.6px;font-weight:bold;letter-spacing:0.00px;color:#5a5b6a">Select a billing customer</div>
<svg style="left:1636px;top:557px" width="36" height="18"><rect x="0.500" y="0.500" width="35" height="17" rx="3.500" fill="#e6e7eb" stroke="#b4b5c0"/><rect x="1.500" y="1.500" width="33" height="7.5" rx="2" fill="#ededf1"/><rect x="12" y="11" width="11.500" height="2.300" fill="#7a7c8d"/></svg>
<svg style="left:1675px;top:557px" width="36" height="18"><rect x="0.500" y="0.500" width="35" height="17" rx="3.500" fill="#e6e7eb" stroke="#b4b5c0"/><rect x="1.500" y="1.500" width="33" height="7.5" rx="2" fill="#ededf1"/><rect x="14" y="6" width="8.500" height="6.500" fill="none" stroke="#7a7c8d" stroke-width="2.400"/></svg>
<svg style="left:1714px;top:557px" width="36" height="18"><rect x="0.500" y="0.500" width="35" height="17" rx="3.500" fill="#e6e7eb" stroke="#b4b5c0"/><rect x="1.500" y="1.500" width="33" height="7.5" rx="2" fill="#ededf1"/><path d="M13,5 L22,13 M22,5 L13,13" stroke="#7a7c8d" stroke-width="2.800" fill="none"/></svg>
<div style="left:802px;top:583px;width:950px;height:28px;background:#c9cad3;border-bottom:1px solid #b0b1bd"></div>
<div style="left:806px;top:584px;width:59px;height:27px;background:#fff;border:1px solid #bfc0cb;border-bottom:none;border-radius:2px 2px 0 0"></div>
<div class="t" style="left:818px;top:590px;font-size:14px;letter-spacing:-1.09px;color:#3f4050">Home</div>
<div style="left:802px;top:611px;width:950px;height:113px;background:linear-gradient(#ffffff 0%,#fdfdfd 40%,#eff0f3 100%);border-bottom:2px solid #a6a7b4"></div>
<div style="left:921px;top:612px;width:1px;height:109px;background:#c9cad2"></div>
<div style="left:1021px;top:612px;width:1px;height:109px;background:#c9cad2"></div>
<div style="left:808px;top:701px;width:108px;height:1px;background:linear-gradient(90deg,transparent,#dddee4 30%,#dddee4 70%,transparent)"></div>
<div style="left:927px;top:701px;width:90px;height:1px;background:linear-gradient(90deg,transparent,#dddee4 30%,#dddee4 70%,transparent)"></div>
<div class="t" style="left:830px;top:705px;font-size:14px;letter-spacing:-0.51px;color:#9092a4">Process</div>
<div class="t" style="left:942px;top:705px;font-size:14px;letter-spacing:-0.06px;color:#9092a4">Format</div>
<svg style="left:910px;top:712px" width="7" height="7"><polygon points="7,0 7,7 0,7" fill="#a5a6b3"/></svg>
<svg style="left:1010px;top:712px" width="7" height="7"><polygon points="7,0 7,7 0,7" fill="#a5a6b3"/></svg>
<svg style="left:1725.5px;top:704px" width="16" height="12" viewBox="0 0 16 12"><path d="M8,1.200 L14.800,8 L12,10.800 L8,7 L4,10.800 L1.200,8 Z" fill="#f1f1f5" stroke="#868896" stroke-width="1.400" stroke-linejoin="round"/></svg>
<svg style="left:815px;top:619px" width="34.5" height="34.5" viewBox="0 0 36 36">
<defs><radialGradient id="ok815" cx="0.5" cy="0.3" r="0.75"><stop offset="0" stop-color="#b2dc55"/><stop offset="0.55" stop-color="#84bd2e"/><stop offset="1" stop-color="#5f991a"/></radialGradient></defs>
<circle cx="18" cy="18" r="17.3" fill="url(#ok815)" stroke="#5f961c" stroke-width="1.2"/>
<path d="M7.5,18.5 L11,15.5 L15.5,20.5 L26,8.5 L29,11 L16,27 Z" fill="#f4f8ec" stroke="#5f9410" stroke-width="0.8"/></svg>
<svg style="left:871px;top:619px" width="34.5" height="34.5" viewBox="0 0 36 36">
<defs><radialGradient id="bk871" cx="0.5" cy="0.25" r="0.8"><stop offset="0" stop-color="#b2dc55"/><stop offset="0.55" stop-color="#84bd2e"/><stop offset="1" stop-color="#5f991a"/></radialGradient></defs>
<circle cx="18" cy="18" r="17.200" fill="url(#bk871)" stroke="#5d931c" stroke-width="1.200"/>
<path d="M6.700,18 L19.600,8.700 L19.600,14.300 L26.500,14.300 L26.500,21.700 L19.600,21.700 L19.600,27.300 Z" fill="#f1f6f4" stroke="#5f9410" stroke-width="0.900" stroke-linejoin="round"/></svg>
<svg style="left:953.5px;top:618px" width="37" height="37" viewBox="0 0 37 37">
<defs><linearGradient id="lh953_5" x1="0" y1="0" x2="0" y2="1"><stop offset="0" stop-color="#8fbcea"/><stop offset="1" stop-color="#5e9ad9"/></linearGradient>
<linearGradient id="lw953_5" gradientUnits="userSpaceOnUse" x1="12" y1="12" x2="34" y2="34"><stop offset="0" stop-color="#d9dde6"/><stop offset="0.5" stop-color="#b9c0cd"/><stop offset="1" stop-color="#9099ab"/></linearGradient></defs>
<rect x="0.800" y="0.800" width="30" height="29.500" rx="2" fill="#eef1f9" stroke="#6f93cf" stroke-width="1.300"/>
<path d="M1.500,2.800 a1.500,1.500 0 0 1 1.500,-1.500 h25.600 a1.500,1.500 0 0 1 1.500,1.500 v5 h-28.600 z" fill="url(#lh953_5)"/>
<path d="M1.500,15 H30 M1.500,22.500 H30 M10.500,1.500 V29.500 M20.500,1.500 V29.500" stroke="#b9c9e6" stroke-width="1.100" fill="none"/>
<g fill="none"><path d="M22.600,15.900 A5,5 0 1 1 17.500,13" stroke="#6b7388" stroke-width="5.600"/><path d="M21,21 L31.800,32.600" stroke="#6b7388" stroke-width="7" stroke-linecap="round"/>
<path d="M22.600,15.900 A5,5 0 1 1 17.500,13" stroke="url(#lw953_5)" stroke-width="3.600"/><path d="M20.500,20.500 L31.800,32.600" stroke="url(#lw953_5)" stroke-width="5" stroke-linecap="round"/></g></svg>
<div class="t" style="left:823px;top:663px;font-size:13.5px;letter-spacing:-0.63px;">Ok</div>
<div class="t" style="left:873px;top:663px;font-size:13.5px;letter-spacing:-0.25px;">Back</div>
<div class="t" style="left:933px;top:663px;font-size:13.5px;letter-spacing:-0.01px;">Save Layout</div>
<div style="left:802px;top:611px;width:59px;height:90px;border:3px solid #4169e1"></div>
<div style="left:802px;top:728px;width:949px;height:219px;border:1px solid #a9aab8;background:#f4f4f7"></div>
<div style="left:803px;top:729px;width:947px;height:41px;background:#ebebef;border-bottom:1px solid #c3c4cf"></div>
<svg style="left:1450px;top:729px" width="300" height="40" viewBox="0 0 300 40" preserveAspectRatio="none">
<defs><linearGradient id="sgd" x1="0" y1="0" x2="1" y2="0"><stop offset="0" stop-color="#ebebef" stop-opacity="0"/><stop offset="0.5" stop-color="#ebe3ef" stop-opacity="0.900"/><stop offset="1" stop-color="#e8e0f2"/></linearGradient>
<linearGradient id="sld" x1="0" y1="0" x2="1" y2="0"><stop offset="0" stop-color="#cbbdec"/><stop offset="0.4" stop-color="#dcd3f1"/><stop offset="1" stop-color="#e7e1f5"/></linearGradient>
<clipPath id="scd"><rect x="0" y="0" width="300" height="40"/></clipPath>
<filter id="sbd" x="-10%" y="-50%" width="120%" height="200%"><feGaussianBlur stdDeviation="1.600"/></filter>
<filter id="shd" x="-10%" y="-50%" width="120%" height="200%"><feGaussianBlur stdDeviation="5"/></filter></defs>
<g clip-path="url(#scd)"><rect x="0" y="0" width="300" height="40" fill="url(#sgd)"/>
<polygon points="70,44 175,-4 215,-4 125,44" fill="#ecd8ee" opacity="0.700" filter="url(#shd)"/>
<g filter="url(#sbd)">
<polygon points="150,42 205,-2 310,-2 310,42" fill="url(#sld)"/>
<polygon points="119,42 188,-2 208,-2 150,42" fill="#f0f0f4"/>
<path d="M232,42 Q262,14 296,-2" stroke="#cdbfec" stroke-width="2" fill="none" opacity="0.800"/>
</g></g></svg>
<div class="t" style="left:808px;top:742px;font-size:14px;letter-spacing:-0.22px;color:#b1b3c0">Drag a column header here to group by that column</div>
<div style="left:803px;top:770px;width:19px;height:25px;background:linear-gradient(#f7f7f9,#eeeff2);border-right:1px solid #c3c4cf;border-bottom:1px solid #c3c4cf;border-left:1px solid #fbfbfc;overflow:hidden"></div><div style="left:822px;top:770px;width:151px;height:25px;background:linear-gradient(#f7f7f9,#eeeff2);border-right:1px solid #c3c4cf;border-bottom:1px solid #c3c4cf;border-left:1px solid #fbfbfc;overflow:hidden"></div><div style="left:822px;top:770px;width:151px;height:25px;overflow:hidden"><div class="t" style="left:5px;top:4px;font-size:14px;letter-spacing:-0.43px;color:#26263a">CustomerCode</div></div><div style="left:973px;top:770px;width:143px;height:25px;background:linear-gradient(#f7f7f9,#eeeff2);border-right:1px solid #c3c4cf;border-bottom:1px solid #c3c4cf;border-left:1px solid #fbfbfc;overflow:hidden"></div><div style="left:973px;top:770px;width:143px;height:25px;overflow:hidden"><div class="t" style="left:5px;top:4px;font-size:14px;letter-spacing:-0.25px;color:#26263a">CustomerType</div></div><div style="left:1116px;top:770px;width:191px;height:25px;background:linear-gradient(#f7f7f9,#eeeff2);border-right:1px solid #c3c4cf;border-bottom:1px solid #c3c4cf;border-left:1px solid #fbfbfc;overflow:hidden"></div><div style="left:1116px;top:770px;width:191px;height:25px;overflow:hidden"><div class="t" style="left:5px;top:4px;font-size:14px;letter-spacing:-0.50px;color:#26263a">CustomerName</div></div><div style="left:1307px;top:770px;width:180px;height:25px;background:linear-gradient(#f7f7f9,#eeeff2);border-right:1px solid #c3c4cf;border-bottom:1px solid #c3c4cf;border-left:1px solid #fbfbfc;overflow:hidden"></div><div style="left:1307px;top:770px;width:180px;height:25px;overflow:hidden"><div class="t" style="left:5px;top:4px;font-size:14px;letter-spacing:-0.49px;color:#26263a">DeptName</div></div><div style="left:1487px;top:770px;width:93px;height:25px;background:linear-gradient(#f7f7f9,#eeeff2);border-right:1px solid #c3c4cf;border-bottom:1px solid #c3c4cf;border-left:1px solid #fbfbfc;overflow:hidden"></div><div style="left:1487px;top:770px;width:93px;height:25px;overflow:hidden"><div class="t" style="left:5px;top:4px;font-size:14px;letter-spacing:-0.22px;color:#26263a">Currency</div></div><div style="left:1580px;top:770px;width:153px;height:25px;background:linear-gradient(#f7f7f9,#eeeff2);border-right:1px solid #c3c4cf;border-bottom:1px solid #c3c4cf;border-left:1px solid #fbfbfc;overflow:hidden"></div><div style="left:1580px;top:770px;width:153px;height:25px;overflow:hidden"><div class="t" style="left:5px;top:4px;font-size:14px;letter-spacing:-0.34px;color:#26263a">SiteDescription</div></div><div style="left:1733px;top:770px;width:17px;height:25px;background:linear-gradient(#f7f7f9,#eeeff2);border-right:1px solid #c3c4cf;border-bottom:1px solid #c3c4cf;border-left:1px solid #fbfbfc;overflow:hidden"></div>
<div style="left:1733px;top:770px;width:17px;height:25px;overflow:hidden"><div class="t" style="left:5px;top:4px;color:#26263a">Cr</div></div>
<div style="left:803px;top:795px;width:19px;height:26px;background:#f4f5f8;border-right:1px solid #c3c4cf"></div>
<svg style="left:809px;top:803px" width="8" height="10" viewBox="0 0 8 10"><path d="M0.300,2.300 A3.700,2.300 0 0 1 7.700,2.300 C7.700,3.800 5,4.800 4.800,6.500 L4.800,9.300 L3.200,9.300 L3.200,6.500 C3,4.800 0.300,3.800 0.300,2.300 Z" fill="#2b2b3a"/><ellipse cx="4" cy="1.700" rx="2.200" ry="0.800" fill="#b9bac6"/></svg>
<div style="left:822px;top:795px;width:151px;height:26px;background:#e0ffff;border-right:1px solid #d0d1da"></div>
<svg style="left:829px;top:801.2px" width="21" height="14" viewBox="0 0 21 14"><rect x="5.300" y="0" width="8.700" height="13.700" rx="1.200" fill="#39a84b"/><text x="9.700" y="10.300" font-size="8" font-family="Liberation Mono,monospace" fill="#b4e6bc" text-anchor="middle">B</text><text x="2.200" y="10.300" font-size="8" font-family="Liberation Mono,monospace" fill="#6f717e" text-anchor="middle">A</text><text x="17.600" y="10.300" font-size="8" font-family="Liberation Mono,monospace" fill="#6f717e" text-anchor="middle">C</text></svg>
<div style="left:973px;top:795px;width:143px;height:26px;background:#e0ffff;border-right:1px solid #d0d1da"></div>
<svg style="left:980px;top:801.2px" width="21" height="14" viewBox="0 0 21 14"><rect x="5.300" y="0" width="8.700" height="13.700" rx="1.200" fill="#39a84b"/><text x="9.700" y="10.300" font-size="8" font-family="Liberation Mono,monospace" fill="#b4e6bc" text-anchor="middle">B</text><text x="2.200" y="10.300" font-size="8" font-family="Liberation Mono,monospace" fill="#6f717e" text-anchor="middle">A</text><text x="17.600" y="10.300" font-size="8" font-family="Liberation Mono,monospace" fill="#6f717e" text-anchor="middle">C</text></svg>
<div style="left:1116px;top:795px;width:191px;height:26px;background:#e0ffff;border-right:1px solid #d0d1da"></div>
<svg style="left:1123px;top:801.2px" width="21" height="14" viewBox="0 0 21 14"><rect x="5.300" y="0" width="8.700" height="13.700" rx="1.200" fill="#39a84b"/><text x="9.700" y="10.300" font-size="8" font-family="Liberation Mono,monospace" fill="#b4e6bc" text-anchor="middle">B</text><text x="2.200" y="10.300" font-size="8" font-family="Liberation Mono,monospace" fill="#6f717e" text-anchor="middle">A</text><text x="17.600" y="10.300" font-size="8" font-family="Liberation Mono,monospace" fill="#6f717e" text-anchor="middle">C</text></svg>
<div style="left:1307px;top:795px;width:180px;height:26px;background:#e0ffff;border-right:1px solid #d0d1da"></div>
<svg style="left:1314px;top:801.2px" width="21" height="14" viewBox="0 0 21 14"><rect x="5.300" y="0" width="8.700" height="13.700" rx="1.200" fill="#39a84b"/><text x="9.700" y="10.300" font-size="8" font-family="Liberation Mono,monospace" fill="#b4e6bc" text-anchor="middle">B</text><text x="2.200" y="10.300" font-size="8" font-family="Liberation Mono,monospace" fill="#6f717e" text-anchor="middle">A</text><text x="17.600" y="10.300" font-size="8" font-family="Liberation Mono,monospace" fill="#6f717e" text-anchor="middle">C</text></svg>
<div style="left:1487px;top:795px;width:93px;height:26px;background:#e0ffff;border-right:1px solid #d0d1da"></div>
<svg style="left:1494px;top:801.2px" width="21" height="14" viewBox="0 0 21 14"><rect x="5.300" y="0" width="8.700" height="13.700" rx="1.200" fill="#39a84b"/><text x="9.700" y="10.300" font-size="8" font-family="Liberation Mono,monospace" fill="#b4e6bc" text-anchor="middle">B</text><text x="2.200" y="10.300" font-size="8" font-family="Liberation Mono,monospace" fill="#6f717e" text-anchor="middle">A</text><text x="17.600" y="10.300" font-size="8" font-family="Liberation Mono,monospace" fill="#6f717e" text-anchor="middle">C</text></svg>
<div style="left:1580px;top:795px;width:148px;height:26px;background:#e0ffff;"></div>
<svg style="left:1587px;top:801.2px" width="21" height="14" viewBox="0 0 21 14"><rect x="5.300" y="0" width="8.700" height="13.700" rx="1.200" fill="#39a84b"/><text x="9.700" y="10.300" font-size="8" font-family="Liberation Mono,monospace" fill="#b4e6bc" text-anchor="middle">B</text><text x="2.200" y="10.300" font-size="8" font-family="Liberation Mono,monospace" fill="#6f717e" text-anchor="middle">A</text><text x="17.600" y="10.300" font-size="8" font-family="Liberation Mono,monospace" fill="#6f717e" text-anchor="middle">C</text></svg>
<div style="left:803px;top:821px;width:925px;height:4px;background:#e4e5ea;border-top:1px solid #cfd0d9;border-bottom:1px solid #cfd0d9"></div>
<div style="left:803px;top:825px;width:19px;height:26px;background:#f4f5f8;border-right:1px solid #c3c4cf;border-bottom:1px solid #c3c4cf"></div>
<div style="left:822px;top:825px;width:151px;height:26px;background:#ebebeb;border-right:1px solid #d0d1da;border-bottom:1px solid #d0d1da"></div>
<div style="left:973px;top:825px;width:143px;height:26px;background:#ebebeb;border-right:1px solid #d0d1da;border-bottom:1px solid #d0d1da"></div>
<div style="left:1116px;top:825px;width:191px;height:26px;background:#ebebeb;border-right:1px solid #d0d1da;border-bottom:1px solid #d0d1da"></div>
<div style="left:1307px;top:825px;width:180px;height:26px;background:#ebebeb;border-right:1px solid #d0d1da;border-bottom:1px solid #d0d1da"></div>
<div style="left:1487px;top:825px;width:93px;height:26px;background:#ebebeb;border-right:1px solid #d0d1da;border-bottom:1px solid #d0d1da"></div>
<div style="left:1580px;top:825px;width:148px;height:26px;background:#ebebeb;border-bottom:1px solid #d0d1da"></div>
<div style="left:803px;top:825px;width:930px;height:26px;overflow:hidden"><div class="t" style="left:25px;top:5px;font-size:14px;letter-spacing:-1.04px;">ABCXYZ123</div><div class="t" style="left:174px;top:5px;font-size:14px;letter-spacing:-1.45px;">TP</div><div class="t" style="left:318px;top:5px;font-size:14px;letter-spacing:-0.86px;">ABC SHoe Co</div><div class="t" style="left:688px;top:5px;font-size:14px;letter-spacing:-1.00px;">ZAR</div><div class="t" style="left:782px;top:5px;font-size:14px;letter-spacing:-0.32px;">Durban</div></div>
<div style="left:803px;top:851px;width:19px;height:26px;background:#f4f5f8;border-right:1px solid #c3c4cf;border-bottom:1px solid #c3c4cf"></div>
<div style="left:822px;top:851px;width:151px;height:26px;background:#e0e8fc;border-right:1px solid #d0d1da;border-bottom:1px solid #d0d1da"></div>
<div style="left:973px;top:851px;width:143px;height:26px;background:#e0e8fc;border-right:1px solid #d0d1da;border-bottom:1px solid #d0d1da"></div>
<div style="left:1116px;top:851px;width:191px;height:26px;background:#e0e8fc;border-right:1px solid #d0d1da;border-bottom:1px solid #d0d1da"></div>
<div style="left:1307px;top:851px;width:180px;height:26px;background:#e0e8fc;border-right:1px solid #d0d1da;border-bottom:1px solid #d0d1da"></div>
<div style="left:1487px;top:851px;width:93px;height:26px;background:#e0e8fc;border-right:1px solid #d0d1da;border-bottom:1px solid #d0d1da"></div>
<div style="left:1580px;top:851px;width:148px;height:26px;background:#e0e8fc;border-bottom:1px solid #d0d1da"></div>
<div style="left:1117px;top:852px;width:189px;height:24px;background:#fff;border:1px dotted #3a3a4a"></div>
<div style="left:803px;top:851px;width:930px;height:26px;overflow:hidden"><div class="t" style="left:25px;top:5px;font-size:14px;letter-spacing:-0.50px;">ANO0001</div><div class="t" style="left:174px;top:5px;font-size:14px;letter-spacing:-0.85px;">ACC</div><div class="t" style="left:318px;top:5px;font-size:14px;letter-spacing:-0.24px;">Head Office</div><div class="t" style="left:688px;top:5px;font-size:14px;letter-spacing:-1.00px;">ZAR</div><div class="t" style="left:782px;top:5px;font-size:14px;letter-spacing:-0.32px;">Durban</div></div>
<div style="left:803px;top:877px;width:19px;height:26px;background:#f4f5f8;border-right:1px solid #c3c4cf;border-bottom:1px solid #c3c4cf"></div>
<div style="left:822px;top:877px;width:151px;height:26px;background:#ebebeb;border-right:1px solid #d0d1da;border-bottom:1px solid #d0d1da"></div>
<div style="left:973px;top:877px;width:143px;height:26px;background:#ebebeb;border-right:1px solid #d0d1da;border-bottom:1px solid #d0d1da"></div>
<div style="left:1116px;top:877px;width:191px;height:26px;background:#ebebeb;border-right:1px solid #d0d1da;border-bottom:1px solid #d0d1da"></div>
<div style="left:1307px;top:877px;width:180px;height:26px;background:#ebebeb;border-right:1px solid #d0d1da;border-bottom:1px solid #d0d1da"></div>
<div style="left:1487px;top:877px;width:93px;height:26px;background:#ebebeb;border-right:1px solid #d0d1da;border-bottom:1px solid #d0d1da"></div>
<div style="left:1580px;top:877px;width:148px;height:26px;background:#ebebeb;border-bottom:1px solid #d0d1da"></div>
<div style="left:803px;top:877px;width:930px;height:26px;overflow:hidden"><div class="t" style="left:25px;top:5px;font-size:14px;letter-spacing:-0.74px;">APP0001</div><div class="t" style="left:174px;top:5px;font-size:14px;letter-spacing:-1.73px;">RE</div><div class="t" style="left:318px;top:5px;font-size:14px;letter-spacing:-0.33px;">Apple Juice Inc</div><div class="t" style="left:688px;top:5px;font-size:14px;letter-spacing:-1.00px;">ZAR</div><div class="t" style="left:782px;top:5px;font-size:14px;letter-spacing:-0.32px;">Durban</div></div>
<div style="left:803px;top:903px;width:19px;height:22px;background:#f4f5f8;border-right:1px solid #c3c4cf;border-bottom:1px solid #c3c4cf"></div>
<div style="left:822px;top:903px;width:151px;height:22px;background:#ebebeb;border-right:1px solid #d0d1da;border-bottom:1px solid #d0d1da"></div>
<div style="left:973px;top:903px;width:143px;height:22px;background:#ebebeb;border-right:1px solid #d0d1da;border-bottom:1px solid #d0d1da"></div>
<div style="left:1116px;top:903px;width:191px;height:22px;background:#ebebeb;border-right:1px solid #d0d1da;border-bottom:1px solid #d0d1da"></div>
<div style="left:1307px;top:903px;width:180px;height:22px;background:#ebebeb;border-right:1px solid #d0d1da;border-bottom:1px solid #d0d1da"></div>
<div style="left:1487px;top:903px;width:93px;height:22px;background:#ebebeb;border-right:1px solid #d0d1da;border-bottom:1px solid #d0d1da"></div>
<div style="left:1580px;top:903px;width:148px;height:22px;background:#ebebeb;border-bottom:1px solid #d0d1da"></div>
<div style="left:803px;top:903px;width:930px;height:22px;overflow:hidden"><div class="t" style="left:25px;top:5px;font-size:14px;letter-spacing:-0.73px;">BEA001</div><div class="t" style="left:174px;top:5px;font-size:14px;letter-spacing:-1.34px;">LEG</div><div class="t" style="left:318px;top:5px;font-size:14px;letter-spacing:-0.44px;">Bearing and Shoe</div><div class="t" style="left:688px;top:5px;font-size:14px;letter-spacing:-1.00px;">ZAR</div><div class="t" style="left:782px;top:5px;font-size:14px;letter-spacing:-0.32px;">Durban</div></div>
<svg style="left:810px;top:859.5px" width="6" height="10"><polygon points="0,0 5.200,4.700 0,9.400" fill="#1c1c2b"/></svg>
<div style="left:802px;top:852px;width:22px;height:26px;border:3px solid #4169e1"></div>
<div style="left:1728px;top:795px;width:22px;height:130px;background:#f4f4f7"></div>
<svg style="left:1735px;top:803px" width="8" height="5"><polygon points="0,5 8,5 4,0" fill="#6a6b78"/></svg>
<div style="left:1734px;top:816px;width:10px;height:22px;border:1px solid #b9bac6;border-radius:5px;background:linear-gradient(90deg,#f4f4f7,#dcdde3)"></div>
<svg style="left:1735px;top:912px" width="8" height="5"><polygon points="0,0 8,0 4,5" fill="#6a6b78"/></svg>
<div style="left:803px;top:925px;width:947px;height:21px;background:#f4f4f7"></div>
<svg style="left:811px;top:931px" width="6" height="9"><polygon points="5.500,0 0,4.500 5.500,9" fill="#7f8192"/></svg>
<div style="left:824px;top:931px;width:145px;height:10px;border:1px solid #b9bac6;border-radius:5px;background:linear-gradient(#f4f4f7,#dcdde3)"></div>
<svg style="left:1715px;top:931.5px" width="6" height="9"><polygon points="0,0 5.500,4.500 0,9" fill="#7f8192"/></svg>
<div style="left:1728px;top:925px;width:22px;height:21px;background:#e6e7eb"></div>
<div style="left:0px;top:996px;width:1920px;height:34px;background:linear-gradient(#e6e7eb,#d2d3da);border-top:1px solid #c5c6cf"></div>
<div class="t" style="left:10px;top:1006px;font-size:14px;letter-spacing:-0.24px;color:#26263a">Open Windows</div>
<svg style="left:104px;top:1011px" width="8" height="5"><polygon points="0,0 8,0 4,4.500" fill="#26263a"/></svg>
<div style="left:1471px;top:1001px;width:1px;height:26px;background:#c0c1cb"></div>
<div style="left:1472px;top:1001px;width:1px;height:26px;background:#eeeef2"></div>
<div style="left:1574px;top:1001px;width:1px;height:26px;background:#c0c1cb"></div>
<div style="left:1575px;top:1001px;width:1px;height:26px;background:#eeeef2"></div>
<div style="left:1664px;top:1001px;width:1px;height:26px;background:#c0c1cb"></div>
<div style="left:1665px;top:1001px;width:1px;height:26px;background:#eeeef2"></div>
<div style="left:1787px;top:1001px;width:1px;height:26px;background:#c0c1cb"></div>
<div style="left:1788px;top:1001px;width:1px;height:26px;background:#eeeef2"></div>
<div class="t" style="left:1484px;top:1006px;font-size:14px;letter-spacing:-0.47px;color:#26263a">User : Bianca</div>
<div class="t" style="left:1585px;top:1006px;font-size:14px;letter-spacing:-0.01px;color:#26263a">01/02/2023</div>
<div class="t" style="left:1676px;top:1006px;font-size:14px;letter-spacing:-0.01px;color:#26263a">Version : 2.5.1.4</div>
<div class="t" style="left:1798px;top:1006px;font-size:14px;letter-spacing:-0.55px;color:#26263a">Example Company</div>
<svg style="left:0;top:0" width="1920" height="1030"><line x1="1307" y1="479" x2="1245.0" y2="483.1" stroke="#4169e1" stroke-width="1.600"/><polygon points="1231,484 1244.6,478.1 1245.3,488.1" fill="#4169e1"/><circle cx="1307" cy="479" r="14" fill="#4169e1"/><text x="1307" y="483.5" font-size="13" fill="#fff" text-anchor="middle" font-family="Liberation Sans,sans-serif">1</text></svg>
<svg style="left:0;top:0" width="1920" height="1030"><line x1="653" y1="872" x2="786.0" y2="868.4" stroke="#4169e1" stroke-width="1.600"/><polygon points="800,868 786.1,873.4 785.9,863.4" fill="#4169e1"/><circle cx="653" cy="872" r="15" fill="#4169e1"/><text x="653" y="876.5" font-size="13" fill="#fff" text-anchor="middle" font-family="Liberation Sans,sans-serif">2</text></svg>
<svg style="left:0;top:0" width="1920" height="1030"><line x1="664" y1="745" x2="790.3" y2="661.2" stroke="#4169e1" stroke-width="1.600"/><polygon points="802,653.5 793.1,665.4 787.6,657.1" fill="#4169e1"/><circle cx="664" cy="745" r="15" fill="#4169e1"/><text x="664" y="749.5" font-size="13" fill="#fff" text-anchor="middle" font-family="Liberation Sans,sans-serif">3</text></svg>
<div style="left:0px;top:0px;width:1px;height:1030px;background:#c9cad2"></div>
<div style="left:1919px;top:0px;width:1px;height:1030px;background:#c9cad2"></div>
</body></html>
